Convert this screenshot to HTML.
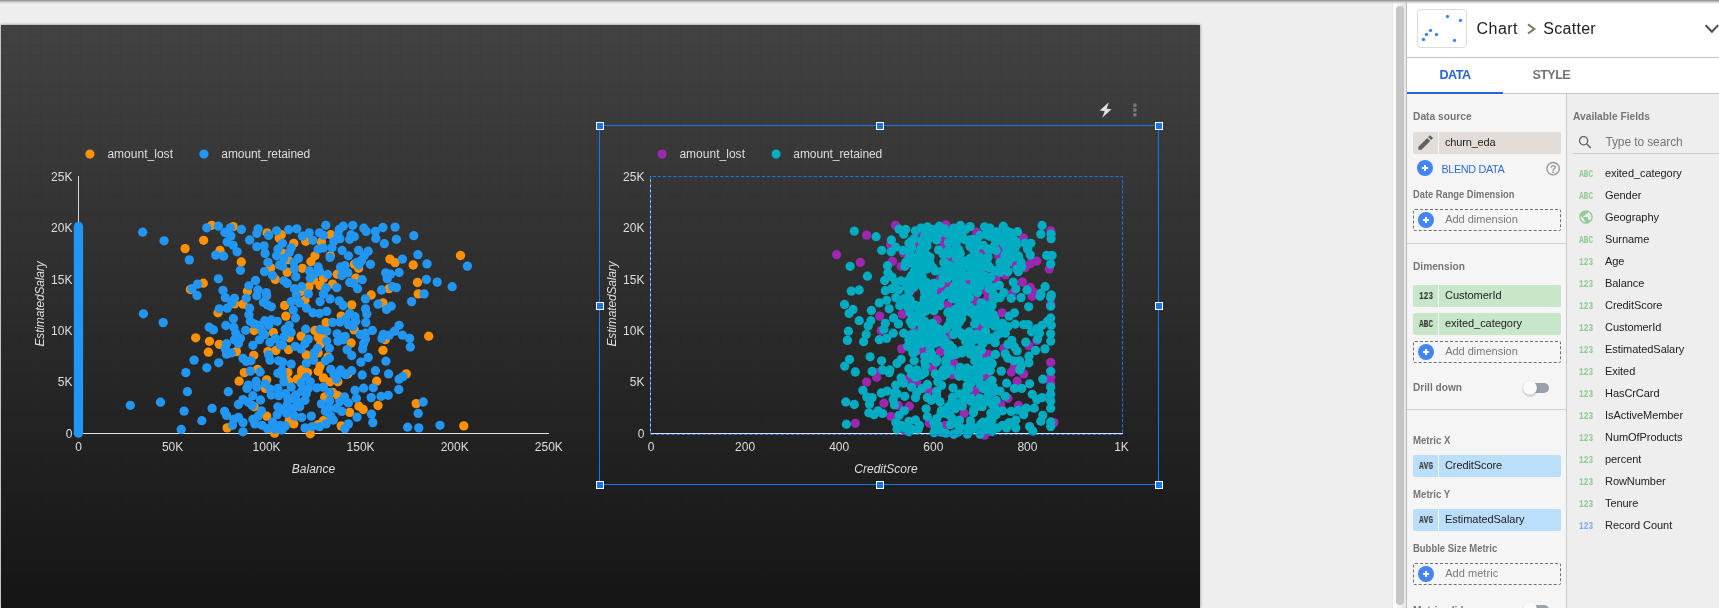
<!DOCTYPE html>
<html><head><meta charset="utf-8"><title>Chart Scatter</title>
<style>
*{box-sizing:border-box;margin:0;padding:0}
html,body{width:1719px;height:608px;overflow:hidden;background:#eeeeee;font-family:"Liberation Sans",sans-serif;}
#topshadow{position:absolute;left:0;top:0;width:1719px;height:4px;background:linear-gradient(#8e8e8e 0,#a8a8a8 1px,#d0d0d0 2px,rgba(238,238,238,0) 4px);z-index:50}
#canvas{position:absolute;left:1px;top:25px;width:1199px;height:583px;
 background:linear-gradient(to bottom,#424242 0,#151515 100%);
 box-shadow:0 0 3px rgba(0,0,0,.45);
}
#sbtrack{position:absolute;left:1392px;top:3px;width:14px;height:605px;background:linear-gradient(to right,#e8e8e8 0,#e8e8e8 1px,#fafafa 1px,#fafafa 5px,#e9e9e9 11px,#e9e9e9 14px)}
#sbthumb{position:absolute;left:1396px;top:6px;width:8px;height:599px;background:#c6c6c6;border-radius:4px}
#panel{position:absolute;left:1406px;top:0;width:313px;height:608px;background:#fff;border-left:1px solid #bcbcbc}
.a{position:absolute}
.t{position:absolute;white-space:nowrap;line-height:20px;height:20px}
#txt{position:absolute;left:0;top:0;width:1719px;height:608px;will-change:transform;-webkit-font-smoothing:antialiased}
.chip{position:absolute;left:1413px;width:148px;height:22px;border-radius:2px}
.chip i{position:absolute;left:24.8px;top:0;width:1.3px;height:22px;background:#f5f5f5}
.dash{position:absolute;left:1413px;width:148px;height:22px;border:1px dashed #707070;border-radius:2px}
.plus{position:absolute;width:16px;height:16px;border-radius:50%;background:#4285f4}
.plus:before{content:"";position:absolute;left:4.8px;top:7.4px;width:6.4px;height:1.2px;background:#fff}
.plus:after{content:"";position:absolute;left:7.4px;top:4.8px;width:1.2px;height:6.4px;background:#fff}
.ic{position:absolute;white-space:nowrap;font-family:"Liberation Mono",monospace;font-weight:bold;font-size:10.5px;line-height:12px;height:12px;transform-origin:0 50%;transform:scaleX(.75);letter-spacing:0;will-change:transform}
.hl{position:absolute;height:1px;background:#cfcfcf}
</style></head><body>
<div id="canvas"><svg width="1199" height="583" style="display:block" shape-rendering="crispEdges"><defs><pattern id="gr" width="10" height="10" patternUnits="userSpaceOnUse"><rect x="0" y="0" width="1" height="1"/><rect x="2" y="0" width="1" height="1"/><rect x="4" y="0" width="1" height="1"/><rect x="6" y="0" width="1" height="1"/><rect x="8" y="0" width="1" height="1"/><rect x="9" y="2" width="1" height="1"/><rect x="9" y="4" width="1" height="1"/><rect x="9" y="6" width="1" height="1"/><rect x="9" y="8" width="1" height="1"/></pattern></defs><rect width="1199" height="583" fill="url(#gr)" fill-opacity=".085"/></svg></div>
<div id="sbtrack"></div><div id="sbthumb"></div>
<div id="panel"></div>
<div class="a" style="left:1417px;top:9px;width:50px;height:39px;border:1px solid #dadce0;border-radius:4px;background:#fff"></div>
<svg class="a" style="left:1417px;top:9px" width="50" height="39"><circle cx="6.5" cy="30.5" r="1.7" fill="#4285f4"/><circle cx="9.5" cy="25.5" r="1.7" fill="#4285f4"/><circle cx="13.5" cy="21.4" r="1.7" fill="#4285f4"/><circle cx="19.5" cy="25.5" r="1.7" fill="#4285f4"/><circle cx="30.5" cy="7.5" r="1.7" fill="#4285f4"/><circle cx="43.5" cy="11.4" r="1.7" fill="#4285f4"/><circle cx="37.5" cy="31.5" r="1.7" fill="#4285f4"/></svg>
<svg class="a" style="left:1524px;top:20px" width="16" height="18"><path d="M4 4.3 L10.4 8.9 L4 13.5" fill="none" stroke="#7a7f62" stroke-width="2.1"/></svg>
<svg class="a" style="left:1702px;top:20px" width="17" height="18"><path d="M3.6 5.1 L9.9 11.7 L16.2 5.1" fill="none" stroke="#4a4e55" stroke-width="2.1"/></svg>
<div class="hl" style="left:1407px;top:57px;width:312px;background:#c4c4c4"></div>
<div class="hl" style="left:1407px;top:93px;width:312px;background:#c9c9c9"></div>
<div class="a" style="left:1407px;top:92px;width:96px;height:2px;background:#2962d9"></div>
<div class="a" style="left:1407px;top:94px;width:159px;height:514px;background:#f5f5f5"></div>
<div class="a" style="left:1566px;top:94px;width:1px;height:514px;background:#c8c8c8"></div>
<div class="a" style="left:1567px;top:94px;width:152px;height:514px;background:#eeeeee"></div>
<div class="chip" style="top:132px;background:#e2ddd9"><i></i></div>
<svg class="a" style="left:1416.4px;top:133.4px" width="19.2" height="19.2" viewBox="0 0 24 24"><path fill="#616161" d="M3 17.25V21h3.75L17.81 9.94l-3.75-3.75L3 17.25zM20.71 7.04a1 1 0 0 0 0-1.41l-2.34-2.34a1 1 0 0 0-1.41 0l-1.83 1.83 3.75 3.75 1.83-1.83z"/></svg>
<div class="chip" style="top:285px;background:#c8e6c9"><i></i></div>
<span class="ic" style="left:1419px;top:290px;color:#333">123</span>
<div class="chip" style="top:313px;background:#c8e6c9"><i></i></div>
<span class="ic" style="left:1419px;top:318px;color:#333">ABC</span>
<div class="chip" style="top:455px;background:#bbdefb"><i></i></div>
<span class="ic" style="left:1419px;top:460px;color:#333">AVG</span>
<div class="chip" style="top:509px;background:#bbdefb"><i></i></div>
<span class="ic" style="left:1419px;top:514px;color:#333">AVG</span>
<div class="plus" style="left:1417px;top:160px"></div>
<svg class="a" style="left:1545px;top:161px" width="16" height="16"><circle cx="8.1" cy="7.7" r="6.2" fill="none" stroke="#999" stroke-width="1.4"/></svg>
<div class="dash" style="top:209px"></div>
<div class="plus" style="left:1418px;top:212px"></div>
<div class="dash" style="top:341px"></div>
<div class="plus" style="left:1418px;top:344px"></div>
<div class="dash" style="top:563px"></div>
<div class="plus" style="left:1418px;top:566px"></div>
<div class="hl" style="left:1407px;top:243px;width:159px"></div>
<div class="hl" style="left:1407px;top:409px;width:159px"></div>
<div class="a" style="left:1527px;top:383px;width:22px;height:10px;border-radius:5px;background:#9aa0a9"></div>
<div class="a" style="left:1522.5px;top:380.8px;width:14.4px;height:14.4px;border-radius:50%;background:#fafafa;box-shadow:0 1px 2px rgba(0,0,0,.3)"></div>
<div class="a" style="left:1527px;top:604.5px;width:22px;height:10px;border-radius:5px;background:#9aa0a9"></div>
<div class="a" style="left:1522.5px;top:602.3px;width:14.4px;height:14.4px;border-radius:50%;background:#fafafa;box-shadow:0 1px 2px rgba(0,0,0,.3)"></div>
<svg class="a" style="left:1576px;top:134.3px" width="18" height="16"><circle cx="7.6" cy="6.7" r="4.1" fill="none" stroke="#616161" stroke-width="1.3"/><path d="M10.6 9.8 L14.8 14" stroke="#616161" stroke-width="1.5" fill="none"/></svg>
<div class="hl" style="left:1573px;top:153px;width:146px;background:#cccccc"></div>
<span class="ic" style="left:1579px;top:168.4px;color:#8fcb92">ABC</span>
<span class="ic" style="left:1579px;top:190.4px;color:#8fcb92">ABC</span>
<svg class="a" style="left:1578px;top:208.6px" width="16" height="16" viewBox="0 0 24 24"><path fill="#8fcb92" d="M12 2C6.48 2 2 6.48 2 12s4.48 10 10 10 10-4.480 10-10S17.52 2 12 2zm-1 17.93c-3.950-.49-7-3.850-7-7.930 0-.62.080-1.210.21-1.790L9 15v1c0 1.100.9 2 2 2v1.930zm6.900-2.540c-.26-.81-1-1.390-1.900-1.390h-1v-3c0-.55-.45-1-1-1H8v-2h2c.55 0 1-.45 1-1V7h2c1.100 0 2-.9 2-2v-.41c2.930 1.190 5 4.060 5 7.410 0 2.080-.8 3.970-2.100 5.390z"/></svg>
<span class="ic" style="left:1579px;top:234.4px;color:#8fcb92">ABC</span>
<span class="ic" style="left:1579px;top:256.4px;color:#8fcb92">123</span>
<span class="ic" style="left:1579px;top:278.4px;color:#8fcb92">123</span>
<span class="ic" style="left:1579px;top:300.4px;color:#8fcb92">123</span>
<span class="ic" style="left:1579px;top:322.4px;color:#8fcb92">123</span>
<span class="ic" style="left:1579px;top:344.4px;color:#8fcb92">123</span>
<span class="ic" style="left:1579px;top:366.4px;color:#8fcb92">123</span>
<span class="ic" style="left:1579px;top:388.4px;color:#8fcb92">123</span>
<span class="ic" style="left:1579px;top:410.4px;color:#8fcb92">123</span>
<span class="ic" style="left:1579px;top:432.4px;color:#8fcb92">123</span>
<span class="ic" style="left:1579px;top:454.4px;color:#8fcb92">123</span>
<span class="ic" style="left:1579px;top:476.4px;color:#8fcb92">123</span>
<span class="ic" style="left:1579px;top:498.4px;color:#8fcb92">123</span>
<span class="ic" style="left:1579px;top:520.4px;color:#7baaf7">123</span>
<div id="topshadow"></div>
<svg class="a" style="left:0;top:0" width="1200" height="608" viewBox="0 0 1200 608"><rect x="78" y="176" width="1" height="258" fill="#d6d6d6"/><rect x="78" y="433" width="471" height="1" fill="#e2e2e2"/><rect x="650" y="176" width="1" height="258" fill="#d6d6d6"/><rect x="650" y="433" width="473" height="1" fill="#e2e2e2"/><rect x="73.8" y="226.5" width="9.3" height="207" fill="#2196f3"/><circle cx="78.45" cy="226.5" r="4.65" fill="#2196f3"/><circle cx="78.45" cy="433.2" r="4.65" fill="#2196f3"/><circle cx="270.7" cy="267.9" r="4.65" fill="#ff9100"/><circle cx="211.7" cy="225.3" r="4.65" fill="#ff9100"/><circle cx="233.2" cy="226.6" r="4.65" fill="#ff9100"/><circle cx="220.0" cy="250.5" r="4.65" fill="#ff9100"/><circle cx="267.1" cy="232.8" r="4.65" fill="#ff9100"/><circle cx="279.2" cy="238.0" r="4.65" fill="#ff9100"/><circle cx="203.3" cy="283.2" r="4.65" fill="#ff9100"/><circle cx="190.4" cy="289.5" r="4.65" fill="#ff9100"/><circle cx="275.3" cy="279.5" r="4.65" fill="#ff9100"/><circle cx="247.4" cy="291.3" r="4.65" fill="#ff9100"/><circle cx="203.6" cy="240.3" r="4.65" fill="#ff9100"/><circle cx="185.1" cy="248.6" r="4.65" fill="#ff9100"/><circle cx="241.3" cy="262.0" r="4.65" fill="#ff9100"/><circle cx="281.3" cy="234.7" r="4.65" fill="#ff9100"/><circle cx="293.8" cy="243.3" r="4.65" fill="#ff9100"/><circle cx="305.7" cy="241.3" r="4.65" fill="#ff9100"/><circle cx="321.4" cy="242.0" r="4.65" fill="#ff9100"/><circle cx="330.7" cy="234.7" r="4.65" fill="#ff9100"/><circle cx="282.6" cy="253.2" r="4.65" fill="#ff9100"/><circle cx="287.9" cy="259.7" r="4.65" fill="#ff9100"/><circle cx="314.9" cy="255.8" r="4.65" fill="#ff9100"/><circle cx="310.9" cy="261.7" r="4.65" fill="#ff9100"/><circle cx="302.4" cy="268.3" r="4.65" fill="#ff9100"/><circle cx="287.2" cy="272.2" r="4.65" fill="#ff9100"/><circle cx="330.3" cy="255.8" r="4.65" fill="#ff9100"/><circle cx="354.3" cy="264.3" r="4.65" fill="#ff9100"/><circle cx="358.6" cy="268.3" r="4.65" fill="#ff9100"/><circle cx="337.2" cy="274.2" r="4.65" fill="#ff9100"/><circle cx="323.4" cy="278.2" r="4.65" fill="#ff9100"/><circle cx="313.6" cy="280.1" r="4.65" fill="#ff9100"/><circle cx="355.7" cy="278.2" r="4.65" fill="#ff9100"/><circle cx="320.1" cy="285.4" r="4.65" fill="#ff9100"/><circle cx="308.9" cy="286.7" r="4.65" fill="#ff9100"/><circle cx="332.6" cy="284.1" r="4.65" fill="#ff9100"/><circle cx="389.9" cy="259.1" r="4.65" fill="#ff9100"/><circle cx="395.1" cy="262.6" r="4.65" fill="#ff9100"/><circle cx="413.2" cy="265.0" r="4.65" fill="#ff9100"/><circle cx="417.5" cy="282.5" r="4.65" fill="#ff9100"/><circle cx="388.9" cy="288.7" r="4.65" fill="#ff9100"/><circle cx="371.2" cy="295.0" r="4.65" fill="#ff9100"/><circle cx="418.2" cy="293.9" r="4.65" fill="#ff9100"/><circle cx="301.7" cy="291.3" r="4.65" fill="#ff9100"/><circle cx="460.5" cy="255.5" r="4.65" fill="#ff9100"/><circle cx="218.0" cy="312.8" r="4.65" fill="#ff9100"/><circle cx="243.0" cy="304.2" r="4.65" fill="#ff9100"/><circle cx="234.5" cy="303.9" r="4.65" fill="#ff9100"/><circle cx="254.2" cy="330.5" r="4.65" fill="#ff9100"/><circle cx="273.3" cy="332.5" r="4.65" fill="#ff9100"/><circle cx="195.7" cy="337.8" r="4.65" fill="#ff9100"/><circle cx="209.5" cy="341.3" r="4.65" fill="#ff9100"/><circle cx="219.3" cy="344.3" r="4.65" fill="#ff9100"/><circle cx="208.4" cy="352.2" r="4.65" fill="#ff9100"/><circle cx="236.4" cy="351.6" r="4.65" fill="#ff9100"/><circle cx="253.8" cy="355.3" r="4.65" fill="#ff9100"/><circle cx="268.0" cy="351.6" r="4.65" fill="#ff9100"/><circle cx="275.9" cy="350.5" r="4.65" fill="#ff9100"/><circle cx="257.5" cy="369.3" r="4.65" fill="#ff9100"/><circle cx="244.3" cy="372.6" r="4.65" fill="#ff9100"/><circle cx="284.6" cy="305.5" r="4.65" fill="#ff9100"/><circle cx="305.0" cy="300.3" r="4.65" fill="#ff9100"/><circle cx="285.9" cy="316.1" r="4.65" fill="#ff9100"/><circle cx="351.7" cy="304.9" r="4.65" fill="#ff9100"/><circle cx="383.0" cy="302.9" r="4.65" fill="#ff9100"/><circle cx="341.2" cy="316.1" r="4.65" fill="#ff9100"/><circle cx="326.1" cy="322.6" r="4.65" fill="#ff9100"/><circle cx="314.9" cy="330.5" r="4.65" fill="#ff9100"/><circle cx="318.2" cy="337.1" r="4.65" fill="#ff9100"/><circle cx="323.4" cy="338.4" r="4.65" fill="#ff9100"/><circle cx="320.8" cy="343.7" r="4.65" fill="#ff9100"/><circle cx="301.1" cy="336.1" r="4.65" fill="#ff9100"/><circle cx="289.2" cy="337.8" r="4.65" fill="#ff9100"/><circle cx="354.3" cy="329.9" r="4.65" fill="#ff9100"/><circle cx="385.3" cy="339.7" r="4.65" fill="#ff9100"/><circle cx="351.1" cy="343.0" r="4.65" fill="#ff9100"/><circle cx="288.6" cy="349.6" r="4.65" fill="#ff9100"/><circle cx="306.3" cy="354.9" r="4.65" fill="#ff9100"/><circle cx="318.2" cy="352.9" r="4.65" fill="#ff9100"/><circle cx="328.0" cy="356.8" r="4.65" fill="#ff9100"/><circle cx="383.0" cy="350.3" r="4.65" fill="#ff9100"/><circle cx="428.7" cy="336.2" r="4.65" fill="#ff9100"/><circle cx="320.1" cy="366.1" r="4.65" fill="#ff9100"/><circle cx="301.7" cy="370.0" r="4.65" fill="#ff9100"/><circle cx="307.6" cy="372.6" r="4.65" fill="#ff9100"/><circle cx="318.2" cy="371.3" r="4.65" fill="#ff9100"/><circle cx="287.9" cy="372.6" r="4.65" fill="#ff9100"/><circle cx="406.3" cy="373.9" r="4.65" fill="#ff9100"/><circle cx="239.1" cy="381.2" r="4.65" fill="#ff9100"/><circle cx="266.7" cy="379.9" r="4.65" fill="#ff9100"/><circle cx="265.4" cy="388.4" r="4.65" fill="#ff9100"/><circle cx="254.2" cy="406.8" r="4.65" fill="#ff9100"/><circle cx="266.7" cy="416.1" r="4.65" fill="#ff9100"/><circle cx="227.2" cy="427.9" r="4.65" fill="#ff9100"/><circle cx="274.6" cy="433.2" r="4.65" fill="#ff9100"/><circle cx="301.7" cy="372.6" r="4.65" fill="#ff9100"/><circle cx="297.1" cy="379.2" r="4.65" fill="#ff9100"/><circle cx="323.4" cy="377.9" r="4.65" fill="#ff9100"/><circle cx="330.0" cy="381.8" r="4.65" fill="#ff9100"/><circle cx="337.9" cy="381.8" r="4.65" fill="#ff9100"/><circle cx="347.8" cy="373.9" r="4.65" fill="#ff9100"/><circle cx="376.7" cy="381.2" r="4.65" fill="#ff9100"/><circle cx="332.6" cy="392.4" r="4.65" fill="#ff9100"/><circle cx="324.7" cy="397.0" r="4.65" fill="#ff9100"/><circle cx="337.9" cy="395.7" r="4.65" fill="#ff9100"/><circle cx="358.9" cy="406.2" r="4.65" fill="#ff9100"/><circle cx="363.2" cy="409.5" r="4.65" fill="#ff9100"/><circle cx="349.7" cy="412.4" r="4.65" fill="#ff9100"/><circle cx="378.0" cy="405.5" r="4.65" fill="#ff9100"/><circle cx="416.2" cy="403.6" r="4.65" fill="#ff9100"/><circle cx="289.2" cy="420.7" r="4.65" fill="#ff9100"/><circle cx="293.8" cy="423.9" r="4.65" fill="#ff9100"/><circle cx="323.4" cy="420.7" r="4.65" fill="#ff9100"/><circle cx="318.2" cy="424.6" r="4.65" fill="#ff9100"/><circle cx="341.2" cy="425.9" r="4.65" fill="#ff9100"/><circle cx="310.3" cy="433.8" r="4.65" fill="#ff9100"/><circle cx="288.6" cy="381.2" r="4.65" fill="#ff9100"/><circle cx="463.8" cy="425.9" r="4.65" fill="#ff9100"/><circle cx="142.6" cy="232.2" r="4.65" fill="#2196f3"/><circle cx="164.1" cy="240.8" r="4.65" fill="#2196f3"/><circle cx="189.3" cy="259.9" r="4.65" fill="#2196f3"/><circle cx="206.8" cy="227.8" r="4.65" fill="#2196f3"/><circle cx="218.4" cy="226.2" r="4.65" fill="#2196f3"/><circle cx="230.3" cy="227.8" r="4.65" fill="#2196f3"/><circle cx="224.9" cy="232.5" r="4.65" fill="#2196f3"/><circle cx="230.9" cy="236.1" r="4.65" fill="#2196f3"/><circle cx="227.2" cy="242.0" r="4.65" fill="#2196f3"/><circle cx="233.2" cy="245.3" r="4.65" fill="#2196f3"/><circle cx="237.1" cy="251.8" r="4.65" fill="#2196f3"/><circle cx="241.4" cy="229.5" r="4.65" fill="#2196f3"/><circle cx="258.2" cy="228.8" r="4.65" fill="#2196f3"/><circle cx="256.8" cy="233.4" r="4.65" fill="#2196f3"/><circle cx="249.6" cy="240.0" r="4.65" fill="#2196f3"/><circle cx="256.8" cy="246.6" r="4.65" fill="#2196f3"/><circle cx="264.1" cy="245.9" r="4.65" fill="#2196f3"/><circle cx="265.1" cy="253.4" r="4.65" fill="#2196f3"/><circle cx="268.0" cy="262.4" r="4.65" fill="#2196f3"/><circle cx="268.7" cy="235.4" r="4.65" fill="#2196f3"/><circle cx="276.6" cy="230.8" r="4.65" fill="#2196f3"/><circle cx="215.7" cy="255.1" r="4.65" fill="#2196f3"/><circle cx="223.6" cy="256.2" r="4.65" fill="#2196f3"/><circle cx="240.4" cy="270.3" r="4.65" fill="#2196f3"/><circle cx="218.4" cy="278.8" r="4.65" fill="#2196f3"/><circle cx="264.5" cy="271.6" r="4.65" fill="#2196f3"/><circle cx="272.6" cy="275.5" r="4.65" fill="#2196f3"/><circle cx="255.5" cy="280.5" r="4.65" fill="#2196f3"/><circle cx="248.9" cy="285.8" r="4.65" fill="#2196f3"/><circle cx="197.6" cy="284.1" r="4.65" fill="#2196f3"/><circle cx="192.0" cy="288.7" r="4.65" fill="#2196f3"/><circle cx="223.0" cy="290.3" r="4.65" fill="#2196f3"/><circle cx="257.9" cy="290.0" r="4.65" fill="#2196f3"/><circle cx="266.3" cy="292.6" r="4.65" fill="#2196f3"/><circle cx="197.0" cy="295.5" r="4.65" fill="#2196f3"/><circle cx="277.9" cy="249.2" r="4.65" fill="#2196f3"/><circle cx="276.6" cy="255.8" r="4.65" fill="#2196f3"/><circle cx="279.5" cy="265.0" r="4.65" fill="#2196f3"/><circle cx="288.6" cy="229.7" r="4.65" fill="#2196f3"/><circle cx="296.8" cy="228.8" r="4.65" fill="#2196f3"/><circle cx="302.4" cy="236.1" r="4.65" fill="#2196f3"/><circle cx="309.2" cy="232.8" r="4.65" fill="#2196f3"/><circle cx="312.9" cy="240.3" r="4.65" fill="#2196f3"/><circle cx="325.8" cy="225.3" r="4.65" fill="#2196f3"/><circle cx="319.5" cy="232.8" r="4.65" fill="#2196f3"/><circle cx="323.4" cy="235.4" r="4.65" fill="#2196f3"/><circle cx="343.2" cy="226.2" r="4.65" fill="#2196f3"/><circle cx="339.2" cy="229.5" r="4.65" fill="#2196f3"/><circle cx="337.9" cy="234.7" r="4.65" fill="#2196f3"/><circle cx="339.9" cy="238.7" r="4.65" fill="#2196f3"/><circle cx="333.9" cy="241.3" r="4.65" fill="#2196f3"/><circle cx="332.0" cy="247.6" r="4.65" fill="#2196f3"/><circle cx="352.8" cy="225.3" r="4.65" fill="#2196f3"/><circle cx="351.1" cy="234.7" r="4.65" fill="#2196f3"/><circle cx="354.3" cy="236.7" r="4.65" fill="#2196f3"/><circle cx="349.7" cy="239.3" r="4.65" fill="#2196f3"/><circle cx="363.8" cy="228.2" r="4.65" fill="#2196f3"/><circle cx="366.2" cy="231.4" r="4.65" fill="#2196f3"/><circle cx="375.4" cy="231.4" r="4.65" fill="#2196f3"/><circle cx="382.9" cy="227.5" r="4.65" fill="#2196f3"/><circle cx="375.8" cy="238.4" r="4.65" fill="#2196f3"/><circle cx="384.3" cy="243.7" r="4.65" fill="#2196f3"/><circle cx="395.1" cy="227.1" r="4.65" fill="#2196f3"/><circle cx="396.4" cy="239.3" r="4.65" fill="#2196f3"/><circle cx="413.8" cy="235.7" r="4.65" fill="#2196f3"/><circle cx="282.4" cy="243.3" r="4.65" fill="#2196f3"/><circle cx="291.2" cy="247.9" r="4.65" fill="#2196f3"/><circle cx="289.2" cy="252.5" r="4.65" fill="#2196f3"/><circle cx="318.2" cy="249.2" r="4.65" fill="#2196f3"/><circle cx="323.4" cy="247.9" r="4.65" fill="#2196f3"/><circle cx="342.1" cy="250.5" r="4.65" fill="#2196f3"/><circle cx="348.4" cy="255.8" r="4.65" fill="#2196f3"/><circle cx="358.6" cy="250.3" r="4.65" fill="#2196f3"/><circle cx="368.2" cy="251.2" r="4.65" fill="#2196f3"/><circle cx="364.2" cy="255.8" r="4.65" fill="#2196f3"/><circle cx="361.6" cy="260.4" r="4.65" fill="#2196f3"/><circle cx="357.0" cy="262.4" r="4.65" fill="#2196f3"/><circle cx="358.9" cy="265.0" r="4.65" fill="#2196f3"/><circle cx="370.5" cy="264.3" r="4.65" fill="#2196f3"/><circle cx="330.0" cy="257.4" r="4.65" fill="#2196f3"/><circle cx="298.4" cy="258.4" r="4.65" fill="#2196f3"/><circle cx="293.8" cy="262.4" r="4.65" fill="#2196f3"/><circle cx="283.9" cy="258.4" r="4.65" fill="#2196f3"/><circle cx="282.6" cy="266.3" r="4.65" fill="#2196f3"/><circle cx="294.5" cy="268.9" r="4.65" fill="#2196f3"/><circle cx="295.8" cy="276.8" r="4.65" fill="#2196f3"/><circle cx="340.5" cy="267.0" r="4.65" fill="#2196f3"/><circle cx="345.1" cy="265.7" r="4.65" fill="#2196f3"/><circle cx="343.2" cy="271.6" r="4.65" fill="#2196f3"/><circle cx="347.8" cy="272.9" r="4.65" fill="#2196f3"/><circle cx="341.8" cy="275.5" r="4.65" fill="#2196f3"/><circle cx="318.2" cy="267.0" r="4.65" fill="#2196f3"/><circle cx="319.5" cy="271.6" r="4.65" fill="#2196f3"/><circle cx="309.6" cy="270.9" r="4.65" fill="#2196f3"/><circle cx="314.2" cy="274.2" r="4.65" fill="#2196f3"/><circle cx="310.3" cy="278.2" r="4.65" fill="#2196f3"/><circle cx="327.6" cy="274.5" r="4.65" fill="#2196f3"/><circle cx="349.7" cy="282.4" r="4.65" fill="#2196f3"/><circle cx="353.7" cy="283.4" r="4.65" fill="#2196f3"/><circle cx="362.2" cy="279.7" r="4.65" fill="#2196f3"/><circle cx="357.6" cy="288.7" r="4.65" fill="#2196f3"/><circle cx="283.9" cy="280.8" r="4.65" fill="#2196f3"/><circle cx="287.2" cy="283.4" r="4.65" fill="#2196f3"/><circle cx="294.5" cy="288.7" r="4.65" fill="#2196f3"/><circle cx="301.7" cy="286.7" r="4.65" fill="#2196f3"/><circle cx="326.1" cy="288.0" r="4.65" fill="#2196f3"/><circle cx="336.8" cy="287.6" r="4.65" fill="#2196f3"/><circle cx="308.3" cy="293.9" r="4.65" fill="#2196f3"/><circle cx="323.4" cy="293.9" r="4.65" fill="#2196f3"/><circle cx="402.4" cy="259.1" r="4.65" fill="#2196f3"/><circle cx="417.9" cy="254.7" r="4.65" fill="#2196f3"/><circle cx="427.0" cy="263.9" r="4.65" fill="#2196f3"/><circle cx="399.1" cy="272.5" r="4.65" fill="#2196f3"/><circle cx="385.7" cy="272.9" r="4.65" fill="#2196f3"/><circle cx="390.5" cy="274.2" r="4.65" fill="#2196f3"/><circle cx="387.2" cy="278.8" r="4.65" fill="#2196f3"/><circle cx="392.5" cy="286.7" r="4.65" fill="#2196f3"/><circle cx="396.4" cy="287.6" r="4.65" fill="#2196f3"/><circle cx="381.6" cy="290.0" r="4.65" fill="#2196f3"/><circle cx="426.4" cy="279.5" r="4.65" fill="#2196f3"/><circle cx="437.2" cy="282.1" r="4.65" fill="#2196f3"/><circle cx="424.1" cy="293.9" r="4.65" fill="#2196f3"/><circle cx="296.4" cy="295.0" r="4.65" fill="#2196f3"/><circle cx="467.4" cy="266.1" r="4.65" fill="#2196f3"/><circle cx="452.2" cy="286.7" r="4.65" fill="#2196f3"/><circle cx="143.4" cy="313.8" r="4.65" fill="#2196f3"/><circle cx="163.2" cy="322.6" r="4.65" fill="#2196f3"/><circle cx="219.3" cy="308.8" r="4.65" fill="#2196f3"/><circle cx="227.2" cy="308.2" r="4.65" fill="#2196f3"/><circle cx="231.8" cy="302.9" r="4.65" fill="#2196f3"/><circle cx="225.3" cy="297.6" r="4.65" fill="#2196f3"/><circle cx="234.5" cy="298.3" r="4.65" fill="#2196f3"/><circle cx="246.3" cy="298.3" r="4.65" fill="#2196f3"/><circle cx="249.6" cy="308.2" r="4.65" fill="#2196f3"/><circle cx="248.9" cy="314.7" r="4.65" fill="#2196f3"/><circle cx="256.8" cy="295.7" r="4.65" fill="#2196f3"/><circle cx="266.7" cy="295.7" r="4.65" fill="#2196f3"/><circle cx="263.4" cy="302.2" r="4.65" fill="#2196f3"/><circle cx="267.4" cy="304.9" r="4.65" fill="#2196f3"/><circle cx="271.3" cy="306.8" r="4.65" fill="#2196f3"/><circle cx="233.4" cy="318.7" r="4.65" fill="#2196f3"/><circle cx="225.9" cy="325.5" r="4.65" fill="#2196f3"/><circle cx="233.8" cy="327.2" r="4.65" fill="#2196f3"/><circle cx="209.2" cy="327.2" r="4.65" fill="#2196f3"/><circle cx="213.4" cy="329.9" r="4.65" fill="#2196f3"/><circle cx="245.7" cy="330.3" r="4.65" fill="#2196f3"/><circle cx="250.3" cy="321.3" r="4.65" fill="#2196f3"/><circle cx="254.2" cy="323.9" r="4.65" fill="#2196f3"/><circle cx="259.5" cy="325.3" r="4.65" fill="#2196f3"/><circle cx="264.7" cy="320.7" r="4.65" fill="#2196f3"/><circle cx="271.3" cy="320.0" r="4.65" fill="#2196f3"/><circle cx="277.2" cy="321.3" r="4.65" fill="#2196f3"/><circle cx="268.7" cy="325.3" r="4.65" fill="#2196f3"/><circle cx="262.1" cy="331.2" r="4.65" fill="#2196f3"/><circle cx="264.7" cy="334.5" r="4.65" fill="#2196f3"/><circle cx="259.5" cy="339.7" r="4.65" fill="#2196f3"/><circle cx="252.9" cy="345.3" r="4.65" fill="#2196f3"/><circle cx="235.8" cy="333.2" r="4.65" fill="#2196f3"/><circle cx="240.4" cy="338.4" r="4.65" fill="#2196f3"/><circle cx="234.5" cy="339.7" r="4.65" fill="#2196f3"/><circle cx="238.4" cy="343.7" r="4.65" fill="#2196f3"/><circle cx="226.6" cy="343.7" r="4.65" fill="#2196f3"/><circle cx="225.3" cy="348.9" r="4.65" fill="#2196f3"/><circle cx="226.6" cy="354.2" r="4.65" fill="#2196f3"/><circle cx="231.2" cy="352.9" r="4.65" fill="#2196f3"/><circle cx="270.0" cy="342.4" r="4.65" fill="#2196f3"/><circle cx="275.3" cy="338.4" r="4.65" fill="#2196f3"/><circle cx="280.0" cy="345.0" r="4.65" fill="#2196f3"/><circle cx="268.7" cy="354.9" r="4.65" fill="#2196f3"/><circle cx="270.0" cy="360.1" r="4.65" fill="#2196f3"/><circle cx="278.6" cy="360.8" r="4.65" fill="#2196f3"/><circle cx="243.0" cy="358.4" r="4.65" fill="#2196f3"/><circle cx="246.3" cy="361.4" r="4.65" fill="#2196f3"/><circle cx="250.9" cy="360.8" r="4.65" fill="#2196f3"/><circle cx="194.1" cy="360.1" r="4.65" fill="#2196f3"/><circle cx="218.7" cy="362.8" r="4.65" fill="#2196f3"/><circle cx="206.8" cy="367.8" r="4.65" fill="#2196f3"/><circle cx="185.8" cy="372.6" r="4.65" fill="#2196f3"/><circle cx="250.3" cy="371.1" r="4.65" fill="#2196f3"/><circle cx="260.1" cy="372.0" r="4.65" fill="#2196f3"/><circle cx="277.9" cy="373.3" r="4.65" fill="#2196f3"/><circle cx="291.2" cy="301.6" r="4.65" fill="#2196f3"/><circle cx="297.1" cy="300.3" r="4.65" fill="#2196f3"/><circle cx="299.7" cy="302.9" r="4.65" fill="#2196f3"/><circle cx="293.2" cy="310.1" r="4.65" fill="#2196f3"/><circle cx="295.5" cy="318.0" r="4.65" fill="#2196f3"/><circle cx="306.6" cy="308.2" r="4.65" fill="#2196f3"/><circle cx="312.9" cy="312.8" r="4.65" fill="#2196f3"/><circle cx="319.5" cy="313.4" r="4.65" fill="#2196f3"/><circle cx="326.7" cy="311.4" r="4.65" fill="#2196f3"/><circle cx="320.1" cy="301.6" r="4.65" fill="#2196f3"/><circle cx="330.0" cy="298.9" r="4.65" fill="#2196f3"/><circle cx="339.2" cy="300.9" r="4.65" fill="#2196f3"/><circle cx="343.2" cy="305.5" r="4.65" fill="#2196f3"/><circle cx="365.5" cy="298.9" r="4.65" fill="#2196f3"/><circle cx="365.5" cy="308.8" r="4.65" fill="#2196f3"/><circle cx="366.8" cy="314.1" r="4.65" fill="#2196f3"/><circle cx="378.0" cy="304.2" r="4.65" fill="#2196f3"/><circle cx="386.6" cy="309.5" r="4.65" fill="#2196f3"/><circle cx="391.2" cy="306.2" r="4.65" fill="#2196f3"/><circle cx="411.6" cy="301.6" r="4.65" fill="#2196f3"/><circle cx="349.7" cy="313.4" r="4.65" fill="#2196f3"/><circle cx="355.0" cy="316.7" r="4.65" fill="#2196f3"/><circle cx="345.8" cy="318.7" r="4.65" fill="#2196f3"/><circle cx="339.9" cy="322.0" r="4.65" fill="#2196f3"/><circle cx="332.6" cy="322.4" r="4.65" fill="#2196f3"/><circle cx="348.4" cy="324.6" r="4.65" fill="#2196f3"/><circle cx="355.7" cy="321.3" r="4.65" fill="#2196f3"/><circle cx="353.0" cy="326.6" r="4.65" fill="#2196f3"/><circle cx="365.8" cy="322.6" r="4.65" fill="#2196f3"/><circle cx="289.2" cy="325.3" r="4.65" fill="#2196f3"/><circle cx="285.3" cy="329.2" r="4.65" fill="#2196f3"/><circle cx="291.2" cy="332.5" r="4.65" fill="#2196f3"/><circle cx="283.9" cy="337.1" r="4.65" fill="#2196f3"/><circle cx="282.6" cy="345.0" r="4.65" fill="#2196f3"/><circle cx="305.7" cy="329.2" r="4.65" fill="#2196f3"/><circle cx="308.3" cy="339.1" r="4.65" fill="#2196f3"/><circle cx="305.0" cy="343.7" r="4.65" fill="#2196f3"/><circle cx="295.1" cy="346.3" r="4.65" fill="#2196f3"/><circle cx="301.1" cy="348.9" r="4.65" fill="#2196f3"/><circle cx="320.1" cy="329.5" r="4.65" fill="#2196f3"/><circle cx="326.7" cy="331.2" r="4.65" fill="#2196f3"/><circle cx="337.2" cy="333.8" r="4.65" fill="#2196f3"/><circle cx="345.1" cy="336.4" r="4.65" fill="#2196f3"/><circle cx="337.9" cy="341.1" r="4.65" fill="#2196f3"/><circle cx="343.2" cy="339.7" r="4.65" fill="#2196f3"/><circle cx="326.7" cy="341.1" r="4.65" fill="#2196f3"/><circle cx="329.3" cy="348.3" r="4.65" fill="#2196f3"/><circle cx="317.5" cy="348.3" r="4.65" fill="#2196f3"/><circle cx="314.2" cy="352.9" r="4.65" fill="#2196f3"/><circle cx="313.6" cy="360.1" r="4.65" fill="#2196f3"/><circle cx="306.3" cy="363.4" r="4.65" fill="#2196f3"/><circle cx="291.2" cy="364.1" r="4.65" fill="#2196f3"/><circle cx="282.6" cy="362.1" r="4.65" fill="#2196f3"/><circle cx="282.0" cy="370.0" r="4.65" fill="#2196f3"/><circle cx="360.3" cy="334.5" r="4.65" fill="#2196f3"/><circle cx="365.5" cy="333.2" r="4.65" fill="#2196f3"/><circle cx="365.5" cy="339.1" r="4.65" fill="#2196f3"/><circle cx="363.6" cy="343.7" r="4.65" fill="#2196f3"/><circle cx="362.6" cy="348.9" r="4.65" fill="#2196f3"/><circle cx="372.4" cy="330.5" r="4.65" fill="#2196f3"/><circle cx="383.3" cy="334.5" r="4.65" fill="#2196f3"/><circle cx="382.0" cy="338.4" r="4.65" fill="#2196f3"/><circle cx="389.2" cy="335.1" r="4.65" fill="#2196f3"/><circle cx="394.5" cy="331.2" r="4.65" fill="#2196f3"/><circle cx="399.1" cy="325.3" r="4.65" fill="#2196f3"/><circle cx="402.4" cy="335.1" r="4.65" fill="#2196f3"/><circle cx="409.6" cy="338.4" r="4.65" fill="#2196f3"/><circle cx="410.3" cy="347.0" r="4.65" fill="#2196f3"/><circle cx="347.1" cy="349.6" r="4.65" fill="#2196f3"/><circle cx="351.7" cy="355.5" r="4.65" fill="#2196f3"/><circle cx="325.4" cy="360.8" r="4.65" fill="#2196f3"/><circle cx="329.3" cy="358.2" r="4.65" fill="#2196f3"/><circle cx="360.9" cy="362.1" r="4.65" fill="#2196f3"/><circle cx="368.2" cy="357.5" r="4.65" fill="#2196f3"/><circle cx="385.9" cy="361.2" r="4.65" fill="#2196f3"/><circle cx="330.7" cy="369.3" r="4.65" fill="#2196f3"/><circle cx="340.5" cy="370.0" r="4.65" fill="#2196f3"/><circle cx="351.7" cy="370.7" r="4.65" fill="#2196f3"/><circle cx="375.4" cy="370.7" r="4.65" fill="#2196f3"/><circle cx="388.6" cy="373.9" r="4.65" fill="#2196f3"/><circle cx="362.2" cy="375.0" r="4.65" fill="#2196f3"/><circle cx="333.9" cy="373.9" r="4.65" fill="#2196f3"/><circle cx="345.8" cy="374.6" r="4.65" fill="#2196f3"/><circle cx="187.4" cy="391.7" r="4.65" fill="#2196f3"/><circle cx="228.3" cy="391.7" r="4.65" fill="#2196f3"/><circle cx="130.3" cy="405.3" r="4.65" fill="#2196f3"/><circle cx="160.5" cy="402.2" r="4.65" fill="#2196f3"/><circle cx="184.1" cy="411.1" r="4.65" fill="#2196f3"/><circle cx="212.1" cy="408.4" r="4.65" fill="#2196f3"/><circle cx="224.6" cy="411.4" r="4.65" fill="#2196f3"/><circle cx="226.6" cy="415.4" r="4.65" fill="#2196f3"/><circle cx="201.8" cy="420.7" r="4.65" fill="#2196f3"/><circle cx="181.2" cy="429.5" r="4.65" fill="#2196f3"/><circle cx="256.2" cy="381.2" r="4.65" fill="#2196f3"/><circle cx="248.3" cy="385.1" r="4.65" fill="#2196f3"/><circle cx="247.0" cy="388.4" r="4.65" fill="#2196f3"/><circle cx="256.8" cy="387.1" r="4.65" fill="#2196f3"/><circle cx="265.4" cy="383.8" r="4.65" fill="#2196f3"/><circle cx="270.0" cy="389.1" r="4.65" fill="#2196f3"/><circle cx="271.3" cy="395.0" r="4.65" fill="#2196f3"/><circle cx="277.9" cy="388.4" r="4.65" fill="#2196f3"/><circle cx="278.6" cy="395.7" r="4.65" fill="#2196f3"/><circle cx="252.9" cy="395.7" r="4.65" fill="#2196f3"/><circle cx="243.0" cy="399.6" r="4.65" fill="#2196f3"/><circle cx="248.3" cy="402.2" r="4.65" fill="#2196f3"/><circle cx="238.4" cy="404.5" r="4.65" fill="#2196f3"/><circle cx="252.2" cy="405.5" r="4.65" fill="#2196f3"/><circle cx="260.5" cy="400.0" r="4.65" fill="#2196f3"/><circle cx="261.4" cy="410.8" r="4.65" fill="#2196f3"/><circle cx="258.2" cy="416.1" r="4.65" fill="#2196f3"/><circle cx="252.9" cy="419.3" r="4.65" fill="#2196f3"/><circle cx="254.9" cy="423.9" r="4.65" fill="#2196f3"/><circle cx="262.1" cy="425.3" r="4.65" fill="#2196f3"/><circle cx="267.4" cy="428.6" r="4.65" fill="#2196f3"/><circle cx="272.6" cy="422.0" r="4.65" fill="#2196f3"/><circle cx="277.2" cy="414.7" r="4.65" fill="#2196f3"/><circle cx="277.9" cy="406.8" r="4.65" fill="#2196f3"/><circle cx="275.3" cy="429.2" r="4.65" fill="#2196f3"/><circle cx="280.0" cy="425.3" r="4.65" fill="#2196f3"/><circle cx="238.4" cy="417.4" r="4.65" fill="#2196f3"/><circle cx="233.8" cy="419.3" r="4.65" fill="#2196f3"/><circle cx="243.0" cy="422.6" r="4.65" fill="#2196f3"/><circle cx="232.5" cy="425.3" r="4.65" fill="#2196f3"/><circle cx="243.0" cy="431.8" r="4.65" fill="#2196f3"/><circle cx="282.6" cy="375.3" r="4.65" fill="#2196f3"/><circle cx="283.9" cy="381.8" r="4.65" fill="#2196f3"/><circle cx="291.2" cy="387.1" r="4.65" fill="#2196f3"/><circle cx="306.3" cy="377.2" r="4.65" fill="#2196f3"/><circle cx="301.1" cy="383.2" r="4.65" fill="#2196f3"/><circle cx="310.3" cy="381.8" r="4.65" fill="#2196f3"/><circle cx="336.6" cy="379.2" r="4.65" fill="#2196f3"/><circle cx="341.8" cy="372.6" r="4.65" fill="#2196f3"/><circle cx="399.1" cy="379.2" r="4.65" fill="#2196f3"/><circle cx="403.0" cy="376.6" r="4.65" fill="#2196f3"/><circle cx="398.8" cy="389.5" r="4.65" fill="#2196f3"/><circle cx="316.8" cy="387.8" r="4.65" fill="#2196f3"/><circle cx="323.4" cy="387.1" r="4.65" fill="#2196f3"/><circle cx="329.7" cy="392.4" r="4.65" fill="#2196f3"/><circle cx="301.7" cy="391.1" r="4.65" fill="#2196f3"/><circle cx="306.3" cy="393.7" r="4.65" fill="#2196f3"/><circle cx="285.3" cy="393.7" r="4.65" fill="#2196f3"/><circle cx="291.8" cy="398.3" r="4.65" fill="#2196f3"/><circle cx="305.0" cy="400.3" r="4.65" fill="#2196f3"/><circle cx="299.7" cy="406.8" r="4.65" fill="#2196f3"/><circle cx="287.2" cy="404.9" r="4.65" fill="#2196f3"/><circle cx="282.6" cy="409.5" r="4.65" fill="#2196f3"/><circle cx="286.6" cy="413.4" r="4.65" fill="#2196f3"/><circle cx="294.5" cy="416.1" r="4.65" fill="#2196f3"/><circle cx="301.7" cy="417.4" r="4.65" fill="#2196f3"/><circle cx="311.3" cy="416.1" r="4.65" fill="#2196f3"/><circle cx="321.4" cy="403.9" r="4.65" fill="#2196f3"/><circle cx="329.7" cy="400.9" r="4.65" fill="#2196f3"/><circle cx="325.4" cy="411.4" r="4.65" fill="#2196f3"/><circle cx="329.3" cy="408.2" r="4.65" fill="#2196f3"/><circle cx="330.7" cy="416.1" r="4.65" fill="#2196f3"/><circle cx="333.3" cy="420.0" r="4.65" fill="#2196f3"/><circle cx="326.1" cy="423.9" r="4.65" fill="#2196f3"/><circle cx="319.5" cy="426.6" r="4.65" fill="#2196f3"/><circle cx="312.2" cy="426.6" r="4.65" fill="#2196f3"/><circle cx="305.0" cy="427.9" r="4.65" fill="#2196f3"/><circle cx="285.3" cy="425.9" r="4.65" fill="#2196f3"/><circle cx="282.0" cy="429.9" r="4.65" fill="#2196f3"/><circle cx="339.9" cy="401.6" r="4.65" fill="#2196f3"/><circle cx="344.5" cy="397.0" r="4.65" fill="#2196f3"/><circle cx="348.4" cy="402.9" r="4.65" fill="#2196f3"/><circle cx="356.3" cy="398.3" r="4.65" fill="#2196f3"/><circle cx="341.8" cy="411.4" r="4.65" fill="#2196f3"/><circle cx="336.6" cy="408.2" r="4.65" fill="#2196f3"/><circle cx="355.0" cy="390.4" r="4.65" fill="#2196f3"/><circle cx="363.6" cy="388.2" r="4.65" fill="#2196f3"/><circle cx="373.2" cy="387.8" r="4.65" fill="#2196f3"/><circle cx="371.2" cy="397.6" r="4.65" fill="#2196f3"/><circle cx="381.1" cy="396.3" r="4.65" fill="#2196f3"/><circle cx="388.2" cy="395.3" r="4.65" fill="#2196f3"/><circle cx="357.0" cy="417.1" r="4.65" fill="#2196f3"/><circle cx="371.4" cy="414.1" r="4.65" fill="#2196f3"/><circle cx="372.8" cy="422.6" r="4.65" fill="#2196f3"/><circle cx="348.4" cy="423.9" r="4.65" fill="#2196f3"/><circle cx="344.9" cy="428.6" r="4.65" fill="#2196f3"/><circle cx="423.2" cy="402.0" r="4.65" fill="#2196f3"/><circle cx="418.2" cy="413.4" r="4.65" fill="#2196f3"/><circle cx="407.6" cy="427.2" r="4.65" fill="#2196f3"/><circle cx="418.8" cy="427.9" r="4.65" fill="#2196f3"/><circle cx="440.0" cy="425.3" r="4.65" fill="#2196f3"/><circle cx="295.8" cy="395.0" r="4.65" fill="#2196f3"/><circle cx="297.1" cy="401.6" r="4.65" fill="#2196f3"/><circle cx="293.2" cy="408.2" r="4.65" fill="#2196f3"/><circle cx="287.9" cy="398.9" r="4.65" fill="#2196f3"/><circle cx="308.3" cy="388.4" r="4.65" fill="#2196f3"/><circle cx="895.5" cy="225.3" r="4.65" fill="#9c27b0"/><circle cx="866.6" cy="235.1" r="4.65" fill="#9c27b0"/><circle cx="836.6" cy="254.7" r="4.65" fill="#9c27b0"/><circle cx="860.3" cy="262.4" r="4.65" fill="#9c27b0"/><circle cx="892.5" cy="261.3" r="4.65" fill="#9c27b0"/><circle cx="890.5" cy="244.6" r="4.65" fill="#9c27b0"/><circle cx="918.2" cy="234.7" r="4.65" fill="#9c27b0"/><circle cx="916.8" cy="242.6" r="4.65" fill="#9c27b0"/><circle cx="903.7" cy="253.2" r="4.65" fill="#9c27b0"/><circle cx="901.1" cy="266.3" r="4.65" fill="#9c27b0"/><circle cx="942.5" cy="239.3" r="4.65" fill="#9c27b0"/><circle cx="944.5" cy="245.3" r="4.65" fill="#9c27b0"/><circle cx="945.8" cy="224.9" r="4.65" fill="#9c27b0"/><circle cx="976.7" cy="232.1" r="4.65" fill="#9c27b0"/><circle cx="981.3" cy="250.5" r="4.65" fill="#9c27b0"/><circle cx="949.7" cy="259.7" r="4.65" fill="#9c27b0"/><circle cx="983.9" cy="270.3" r="4.65" fill="#9c27b0"/><circle cx="968.2" cy="280.8" r="4.65" fill="#9c27b0"/><circle cx="947.1" cy="284.7" r="4.65" fill="#9c27b0"/><circle cx="940.5" cy="290.7" r="4.65" fill="#9c27b0"/><circle cx="912.2" cy="289.3" r="4.65" fill="#9c27b0"/><circle cx="985.3" cy="290.0" r="4.65" fill="#9c27b0"/><circle cx="939.9" cy="279.5" r="4.65" fill="#9c27b0"/><circle cx="1023.4" cy="238.0" r="4.65" fill="#9c27b0"/><circle cx="1050.7" cy="230.8" r="4.65" fill="#9c27b0"/><circle cx="998.7" cy="255.8" r="4.65" fill="#9c27b0"/><circle cx="999.3" cy="247.9" r="4.65" fill="#9c27b0"/><circle cx="1030.3" cy="263.7" r="4.65" fill="#9c27b0"/><circle cx="1036.8" cy="261.1" r="4.65" fill="#9c27b0"/><circle cx="1049.3" cy="268.9" r="4.65" fill="#9c27b0"/><circle cx="1015.1" cy="265.7" r="4.65" fill="#9c27b0"/><circle cx="1025.0" cy="267.6" r="4.65" fill="#9c27b0"/><circle cx="1005.3" cy="274.9" r="4.65" fill="#9c27b0"/><circle cx="996.1" cy="278.8" r="4.65" fill="#9c27b0"/><circle cx="1022.4" cy="282.1" r="4.65" fill="#9c27b0"/><circle cx="1030.3" cy="287.4" r="4.65" fill="#9c27b0"/><circle cx="1034.2" cy="292.6" r="4.65" fill="#9c27b0"/><circle cx="1011.8" cy="293.9" r="4.65" fill="#9c27b0"/><circle cx="879.7" cy="316.1" r="4.65" fill="#9c27b0"/><circle cx="902.4" cy="314.1" r="4.65" fill="#9c27b0"/><circle cx="881.3" cy="330.5" r="4.65" fill="#9c27b0"/><circle cx="914.2" cy="331.2" r="4.65" fill="#9c27b0"/><circle cx="937.2" cy="320.0" r="4.65" fill="#9c27b0"/><circle cx="947.8" cy="304.9" r="4.65" fill="#9c27b0"/><circle cx="976.1" cy="300.9" r="4.65" fill="#9c27b0"/><circle cx="948.4" cy="335.8" r="4.65" fill="#9c27b0"/><circle cx="901.7" cy="348.9" r="4.65" fill="#9c27b0"/><circle cx="922.1" cy="350.9" r="4.65" fill="#9c27b0"/><circle cx="940.5" cy="351.6" r="4.65" fill="#9c27b0"/><circle cx="986.6" cy="354.2" r="4.65" fill="#9c27b0"/><circle cx="978.7" cy="327.9" r="4.65" fill="#9c27b0"/><circle cx="932.6" cy="367.4" r="4.65" fill="#9c27b0"/><circle cx="953.7" cy="363.4" r="4.65" fill="#9c27b0"/><circle cx="876.1" cy="372.6" r="4.65" fill="#9c27b0"/><circle cx="987.9" cy="297.6" r="4.65" fill="#9c27b0"/><circle cx="985.3" cy="372.6" r="4.65" fill="#9c27b0"/><circle cx="1002.0" cy="312.8" r="4.65" fill="#9c27b0"/><circle cx="1032.2" cy="296.3" r="4.65" fill="#9c27b0"/><circle cx="1050.7" cy="304.2" r="4.65" fill="#9c27b0"/><circle cx="1028.9" cy="345.7" r="4.65" fill="#9c27b0"/><circle cx="1036.8" cy="340.4" r="4.65" fill="#9c27b0"/><circle cx="1003.9" cy="348.3" r="4.65" fill="#9c27b0"/><circle cx="989.5" cy="354.9" r="4.65" fill="#9c27b0"/><circle cx="1050.7" cy="362.4" r="4.65" fill="#9c27b0"/><circle cx="1011.2" cy="372.0" r="4.65" fill="#9c27b0"/><circle cx="1023.7" cy="373.9" r="4.65" fill="#9c27b0"/><circle cx="1014.5" cy="366.7" r="4.65" fill="#9c27b0"/><circle cx="988.2" cy="372.0" r="4.65" fill="#9c27b0"/><circle cx="866.6" cy="382.1" r="4.65" fill="#9c27b0"/><circle cx="876.7" cy="377.2" r="4.65" fill="#9c27b0"/><circle cx="883.9" cy="403.2" r="4.65" fill="#9c27b0"/><circle cx="908.9" cy="378.6" r="4.65" fill="#9c27b0"/><circle cx="898.4" cy="405.5" r="4.65" fill="#9c27b0"/><circle cx="909.3" cy="406.2" r="4.65" fill="#9c27b0"/><circle cx="890.8" cy="416.3" r="4.65" fill="#9c27b0"/><circle cx="855.3" cy="423.3" r="4.65" fill="#9c27b0"/><circle cx="929.3" cy="423.3" r="4.65" fill="#9c27b0"/><circle cx="945.1" cy="425.3" r="4.65" fill="#9c27b0"/><circle cx="964.2" cy="413.4" r="4.65" fill="#9c27b0"/><circle cx="986.6" cy="375.9" r="4.65" fill="#9c27b0"/><circle cx="953.7" cy="434.5" r="4.65" fill="#9c27b0"/><circle cx="984.6" cy="435.1" r="4.65" fill="#9c27b0"/><circle cx="916.8" cy="381.8" r="4.65" fill="#9c27b0"/><circle cx="928.7" cy="390.4" r="4.65" fill="#9c27b0"/><circle cx="975.4" cy="391.1" r="4.65" fill="#9c27b0"/><circle cx="952.4" cy="374.6" r="4.65" fill="#9c27b0"/><circle cx="905.0" cy="430.5" r="4.65" fill="#9c27b0"/><circle cx="1017.1" cy="381.2" r="4.65" fill="#9c27b0"/><circle cx="1050.7" cy="377.2" r="4.65" fill="#9c27b0"/><circle cx="1050.7" cy="383.2" r="4.65" fill="#9c27b0"/><circle cx="992.1" cy="395.0" r="4.65" fill="#9c27b0"/><circle cx="1007.9" cy="398.3" r="4.65" fill="#9c27b0"/><circle cx="1000.7" cy="404.9" r="4.65" fill="#9c27b0"/><circle cx="1018.4" cy="405.5" r="4.65" fill="#9c27b0"/><circle cx="1048.0" cy="397.6" r="4.65" fill="#9c27b0"/><circle cx="1053.9" cy="422.6" r="4.65" fill="#9c27b0"/><circle cx="924.2" cy="299.4" r="4.65" fill="#00acc1"/><circle cx="928.0" cy="300.0" r="4.65" fill="#00acc1"/><circle cx="933.9" cy="299.7" r="4.65" fill="#00acc1"/><circle cx="940.0" cy="298.1" r="4.65" fill="#00acc1"/><circle cx="952.3" cy="298.7" r="4.65" fill="#00acc1"/><circle cx="960.6" cy="302.1" r="4.65" fill="#00acc1"/><circle cx="966.4" cy="299.5" r="4.65" fill="#00acc1"/><circle cx="913.5" cy="306.4" r="4.65" fill="#00acc1"/><circle cx="921.6" cy="305.4" r="4.65" fill="#00acc1"/><circle cx="927.2" cy="304.0" r="4.65" fill="#00acc1"/><circle cx="931.0" cy="304.6" r="4.65" fill="#00acc1"/><circle cx="939.8" cy="305.7" r="4.65" fill="#00acc1"/><circle cx="958.4" cy="306.9" r="4.65" fill="#00acc1"/><circle cx="961.8" cy="306.3" r="4.65" fill="#00acc1"/><circle cx="969.1" cy="307.7" r="4.65" fill="#00acc1"/><circle cx="983.2" cy="304.2" r="4.65" fill="#00acc1"/><circle cx="986.6" cy="307.2" r="4.65" fill="#00acc1"/><circle cx="991.4" cy="305.9" r="4.65" fill="#00acc1"/><circle cx="909.9" cy="312.8" r="4.65" fill="#00acc1"/><circle cx="919.2" cy="312.3" r="4.65" fill="#00acc1"/><circle cx="925.7" cy="311.1" r="4.65" fill="#00acc1"/><circle cx="947.9" cy="312.8" r="4.65" fill="#00acc1"/><circle cx="960.7" cy="314.3" r="4.65" fill="#00acc1"/><circle cx="967.5" cy="311.0" r="4.65" fill="#00acc1"/><circle cx="971.5" cy="312.8" r="4.65" fill="#00acc1"/><circle cx="975.8" cy="311.8" r="4.65" fill="#00acc1"/><circle cx="982.5" cy="310.2" r="4.65" fill="#00acc1"/><circle cx="988.0" cy="313.2" r="4.65" fill="#00acc1"/><circle cx="913.3" cy="316.8" r="4.65" fill="#00acc1"/><circle cx="920.5" cy="319.7" r="4.65" fill="#00acc1"/><circle cx="950.4" cy="319.8" r="4.65" fill="#00acc1"/><circle cx="959.1" cy="316.4" r="4.65" fill="#00acc1"/><circle cx="961.5" cy="316.8" r="4.65" fill="#00acc1"/><circle cx="975.4" cy="316.9" r="4.65" fill="#00acc1"/><circle cx="978.7" cy="317.6" r="4.65" fill="#00acc1"/><circle cx="986.4" cy="318.3" r="4.65" fill="#00acc1"/><circle cx="995.1" cy="318.9" r="4.65" fill="#00acc1"/><circle cx="912.1" cy="324.5" r="4.65" fill="#00acc1"/><circle cx="918.8" cy="321.9" r="4.65" fill="#00acc1"/><circle cx="925.8" cy="325.3" r="4.65" fill="#00acc1"/><circle cx="931.7" cy="325.4" r="4.65" fill="#00acc1"/><circle cx="952.7" cy="322.4" r="4.65" fill="#00acc1"/><circle cx="959.3" cy="321.9" r="4.65" fill="#00acc1"/><circle cx="984.5" cy="322.4" r="4.65" fill="#00acc1"/><circle cx="988.9" cy="323.3" r="4.65" fill="#00acc1"/><circle cx="922.6" cy="332.3" r="4.65" fill="#00acc1"/><circle cx="926.8" cy="329.9" r="4.65" fill="#00acc1"/><circle cx="931.1" cy="328.2" r="4.65" fill="#00acc1"/><circle cx="938.3" cy="328.9" r="4.65" fill="#00acc1"/><circle cx="946.5" cy="328.4" r="4.65" fill="#00acc1"/><circle cx="957.1" cy="328.4" r="4.65" fill="#00acc1"/><circle cx="969.1" cy="332.2" r="4.65" fill="#00acc1"/><circle cx="985.5" cy="331.3" r="4.65" fill="#00acc1"/><circle cx="911.2" cy="334.7" r="4.65" fill="#00acc1"/><circle cx="919.4" cy="338.2" r="4.65" fill="#00acc1"/><circle cx="925.6" cy="337.4" r="4.65" fill="#00acc1"/><circle cx="931.5" cy="337.1" r="4.65" fill="#00acc1"/><circle cx="934.7" cy="336.1" r="4.65" fill="#00acc1"/><circle cx="941.3" cy="333.8" r="4.65" fill="#00acc1"/><circle cx="962.1" cy="335.8" r="4.65" fill="#00acc1"/><circle cx="968.0" cy="338.2" r="4.65" fill="#00acc1"/><circle cx="974.1" cy="335.4" r="4.65" fill="#00acc1"/><circle cx="976.7" cy="334.7" r="4.65" fill="#00acc1"/><circle cx="982.6" cy="334.6" r="4.65" fill="#00acc1"/><circle cx="990.6" cy="337.8" r="4.65" fill="#00acc1"/><circle cx="916.6" cy="341.9" r="4.65" fill="#00acc1"/><circle cx="921.7" cy="343.4" r="4.65" fill="#00acc1"/><circle cx="925.1" cy="342.7" r="4.65" fill="#00acc1"/><circle cx="934.9" cy="343.3" r="4.65" fill="#00acc1"/><circle cx="940.2" cy="341.9" r="4.65" fill="#00acc1"/><circle cx="943.5" cy="343.3" r="4.65" fill="#00acc1"/><circle cx="970.0" cy="340.5" r="4.65" fill="#00acc1"/><circle cx="973.3" cy="340.4" r="4.65" fill="#00acc1"/><circle cx="982.9" cy="343.4" r="4.65" fill="#00acc1"/><circle cx="995.2" cy="342.7" r="4.65" fill="#00acc1"/><circle cx="911.3" cy="348.2" r="4.65" fill="#00acc1"/><circle cx="916.3" cy="345.8" r="4.65" fill="#00acc1"/><circle cx="930.1" cy="350.0" r="4.65" fill="#00acc1"/><circle cx="946.9" cy="347.0" r="4.65" fill="#00acc1"/><circle cx="952.8" cy="348.4" r="4.65" fill="#00acc1"/><circle cx="964.3" cy="349.9" r="4.65" fill="#00acc1"/><circle cx="971.3" cy="347.8" r="4.65" fill="#00acc1"/><circle cx="978.4" cy="349.9" r="4.65" fill="#00acc1"/><circle cx="915.1" cy="351.8" r="4.65" fill="#00acc1"/><circle cx="931.5" cy="353.9" r="4.65" fill="#00acc1"/><circle cx="951.3" cy="355.3" r="4.65" fill="#00acc1"/><circle cx="955.2" cy="354.3" r="4.65" fill="#00acc1"/><circle cx="961.8" cy="353.0" r="4.65" fill="#00acc1"/><circle cx="970.3" cy="354.0" r="4.65" fill="#00acc1"/><circle cx="975.3" cy="355.2" r="4.65" fill="#00acc1"/><circle cx="924.9" cy="361.7" r="4.65" fill="#00acc1"/><circle cx="932.0" cy="358.9" r="4.65" fill="#00acc1"/><circle cx="936.3" cy="362.0" r="4.65" fill="#00acc1"/><circle cx="946.3" cy="359.7" r="4.65" fill="#00acc1"/><circle cx="978.7" cy="358.4" r="4.65" fill="#00acc1"/><circle cx="985.8" cy="362.2" r="4.65" fill="#00acc1"/><circle cx="988.7" cy="362.1" r="4.65" fill="#00acc1"/><circle cx="925.4" cy="365.7" r="4.65" fill="#00acc1"/><circle cx="946.0" cy="363.8" r="4.65" fill="#00acc1"/><circle cx="967.0" cy="368.2" r="4.65" fill="#00acc1"/><circle cx="976.3" cy="368.2" r="4.65" fill="#00acc1"/><circle cx="979.2" cy="364.9" r="4.65" fill="#00acc1"/><circle cx="984.9" cy="367.3" r="4.65" fill="#00acc1"/><circle cx="991.9" cy="364.3" r="4.65" fill="#00acc1"/><circle cx="911.6" cy="373.9" r="4.65" fill="#00acc1"/><circle cx="922.4" cy="373.9" r="4.65" fill="#00acc1"/><circle cx="942.9" cy="371.7" r="4.65" fill="#00acc1"/><circle cx="946.0" cy="374.0" r="4.65" fill="#00acc1"/><circle cx="958.1" cy="373.6" r="4.65" fill="#00acc1"/><circle cx="964.0" cy="373.7" r="4.65" fill="#00acc1"/><circle cx="971.8" cy="371.3" r="4.65" fill="#00acc1"/><circle cx="978.2" cy="374.0" r="4.65" fill="#00acc1"/><circle cx="982.9" cy="370.3" r="4.65" fill="#00acc1"/><circle cx="990.1" cy="370.8" r="4.65" fill="#00acc1"/><circle cx="926.1" cy="233.1" r="4.65" fill="#00acc1"/><circle cx="934.2" cy="233.0" r="4.65" fill="#00acc1"/><circle cx="939.0" cy="232.5" r="4.65" fill="#00acc1"/><circle cx="944.3" cy="231.8" r="4.65" fill="#00acc1"/><circle cx="949.9" cy="231.8" r="4.65" fill="#00acc1"/><circle cx="958.1" cy="234.2" r="4.65" fill="#00acc1"/><circle cx="961.6" cy="233.9" r="4.65" fill="#00acc1"/><circle cx="986.5" cy="234.0" r="4.65" fill="#00acc1"/><circle cx="993.9" cy="236.2" r="4.65" fill="#00acc1"/><circle cx="911.3" cy="241.5" r="4.65" fill="#00acc1"/><circle cx="923.6" cy="239.3" r="4.65" fill="#00acc1"/><circle cx="928.0" cy="238.3" r="4.65" fill="#00acc1"/><circle cx="955.7" cy="240.8" r="4.65" fill="#00acc1"/><circle cx="959.0" cy="238.8" r="4.65" fill="#00acc1"/><circle cx="965.0" cy="239.8" r="4.65" fill="#00acc1"/><circle cx="970.4" cy="239.8" r="4.65" fill="#00acc1"/><circle cx="976.9" cy="242.1" r="4.65" fill="#00acc1"/><circle cx="926.9" cy="246.0" r="4.65" fill="#00acc1"/><circle cx="956.1" cy="244.8" r="4.65" fill="#00acc1"/><circle cx="970.2" cy="246.7" r="4.65" fill="#00acc1"/><circle cx="976.0" cy="247.7" r="4.65" fill="#00acc1"/><circle cx="994.0" cy="246.7" r="4.65" fill="#00acc1"/><circle cx="909.9" cy="253.5" r="4.65" fill="#00acc1"/><circle cx="919.8" cy="252.6" r="4.65" fill="#00acc1"/><circle cx="925.1" cy="253.4" r="4.65" fill="#00acc1"/><circle cx="943.4" cy="253.5" r="4.65" fill="#00acc1"/><circle cx="948.4" cy="253.8" r="4.65" fill="#00acc1"/><circle cx="954.8" cy="252.9" r="4.65" fill="#00acc1"/><circle cx="958.8" cy="249.8" r="4.65" fill="#00acc1"/><circle cx="990.0" cy="249.7" r="4.65" fill="#00acc1"/><circle cx="916.4" cy="259.1" r="4.65" fill="#00acc1"/><circle cx="921.0" cy="258.2" r="4.65" fill="#00acc1"/><circle cx="927.7" cy="256.0" r="4.65" fill="#00acc1"/><circle cx="957.0" cy="257.5" r="4.65" fill="#00acc1"/><circle cx="970.2" cy="258.5" r="4.65" fill="#00acc1"/><circle cx="975.7" cy="256.1" r="4.65" fill="#00acc1"/><circle cx="979.4" cy="256.9" r="4.65" fill="#00acc1"/><circle cx="988.1" cy="257.1" r="4.65" fill="#00acc1"/><circle cx="910.0" cy="262.9" r="4.65" fill="#00acc1"/><circle cx="918.8" cy="264.9" r="4.65" fill="#00acc1"/><circle cx="924.8" cy="263.0" r="4.65" fill="#00acc1"/><circle cx="930.1" cy="263.8" r="4.65" fill="#00acc1"/><circle cx="943.8" cy="262.6" r="4.65" fill="#00acc1"/><circle cx="950.2" cy="266.0" r="4.65" fill="#00acc1"/><circle cx="961.5" cy="266.2" r="4.65" fill="#00acc1"/><circle cx="965.8" cy="262.9" r="4.65" fill="#00acc1"/><circle cx="970.7" cy="266.0" r="4.65" fill="#00acc1"/><circle cx="976.7" cy="264.4" r="4.65" fill="#00acc1"/><circle cx="982.4" cy="264.1" r="4.65" fill="#00acc1"/><circle cx="916.5" cy="270.0" r="4.65" fill="#00acc1"/><circle cx="922.8" cy="270.9" r="4.65" fill="#00acc1"/><circle cx="932.9" cy="267.8" r="4.65" fill="#00acc1"/><circle cx="944.8" cy="269.1" r="4.65" fill="#00acc1"/><circle cx="949.3" cy="269.3" r="4.65" fill="#00acc1"/><circle cx="956.2" cy="271.6" r="4.65" fill="#00acc1"/><circle cx="960.7" cy="271.2" r="4.65" fill="#00acc1"/><circle cx="970.6" cy="268.3" r="4.65" fill="#00acc1"/><circle cx="977.0" cy="271.0" r="4.65" fill="#00acc1"/><circle cx="995.3" cy="270.4" r="4.65" fill="#00acc1"/><circle cx="911.4" cy="275.7" r="4.65" fill="#00acc1"/><circle cx="917.0" cy="273.9" r="4.65" fill="#00acc1"/><circle cx="922.2" cy="277.5" r="4.65" fill="#00acc1"/><circle cx="947.4" cy="278.1" r="4.65" fill="#00acc1"/><circle cx="955.8" cy="277.4" r="4.65" fill="#00acc1"/><circle cx="960.6" cy="277.9" r="4.65" fill="#00acc1"/><circle cx="973.0" cy="273.9" r="4.65" fill="#00acc1"/><circle cx="979.1" cy="275.8" r="4.65" fill="#00acc1"/><circle cx="985.2" cy="276.7" r="4.65" fill="#00acc1"/><circle cx="917.0" cy="280.3" r="4.65" fill="#00acc1"/><circle cx="920.9" cy="281.3" r="4.65" fill="#00acc1"/><circle cx="926.1" cy="283.1" r="4.65" fill="#00acc1"/><circle cx="955.7" cy="283.9" r="4.65" fill="#00acc1"/><circle cx="974.8" cy="280.3" r="4.65" fill="#00acc1"/><circle cx="979.6" cy="280.1" r="4.65" fill="#00acc1"/><circle cx="986.3" cy="280.1" r="4.65" fill="#00acc1"/><circle cx="923.6" cy="288.1" r="4.65" fill="#00acc1"/><circle cx="929.4" cy="287.3" r="4.65" fill="#00acc1"/><circle cx="934.0" cy="287.0" r="4.65" fill="#00acc1"/><circle cx="955.7" cy="286.7" r="4.65" fill="#00acc1"/><circle cx="958.9" cy="286.8" r="4.65" fill="#00acc1"/><circle cx="965.5" cy="287.8" r="4.65" fill="#00acc1"/><circle cx="974.1" cy="289.6" r="4.65" fill="#00acc1"/><circle cx="979.7" cy="285.8" r="4.65" fill="#00acc1"/><circle cx="991.8" cy="287.9" r="4.65" fill="#00acc1"/><circle cx="928.5" cy="295.6" r="4.65" fill="#00acc1"/><circle cx="945.1" cy="294.8" r="4.65" fill="#00acc1"/><circle cx="953.0" cy="295.0" r="4.65" fill="#00acc1"/><circle cx="957.7" cy="295.2" r="4.65" fill="#00acc1"/><circle cx="962.8" cy="294.2" r="4.65" fill="#00acc1"/><circle cx="966.9" cy="295.3" r="4.65" fill="#00acc1"/><circle cx="993.6" cy="294.9" r="4.65" fill="#00acc1"/><circle cx="997.2" cy="232.0" r="4.65" fill="#00acc1"/><circle cx="1005.1" cy="234.4" r="4.65" fill="#00acc1"/><circle cx="1010.5" cy="232.7" r="4.65" fill="#00acc1"/><circle cx="1017.5" cy="231.7" r="4.65" fill="#00acc1"/><circle cx="995.1" cy="239.8" r="4.65" fill="#00acc1"/><circle cx="1004.1" cy="240.7" r="4.65" fill="#00acc1"/><circle cx="1009.8" cy="239.9" r="4.65" fill="#00acc1"/><circle cx="1012.8" cy="238.8" r="4.65" fill="#00acc1"/><circle cx="1004.1" cy="243.8" r="4.65" fill="#00acc1"/><circle cx="1011.0" cy="246.8" r="4.65" fill="#00acc1"/><circle cx="1016.6" cy="244.9" r="4.65" fill="#00acc1"/><circle cx="1007.3" cy="251.6" r="4.65" fill="#00acc1"/><circle cx="1014.8" cy="250.6" r="4.65" fill="#00acc1"/><circle cx="1005.0" cy="256.6" r="4.65" fill="#00acc1"/><circle cx="1013.2" cy="257.1" r="4.65" fill="#00acc1"/><circle cx="1018.5" cy="256.8" r="4.65" fill="#00acc1"/><circle cx="1001.1" cy="266.1" r="4.65" fill="#00acc1"/><circle cx="1008.0" cy="262.6" r="4.65" fill="#00acc1"/><circle cx="999.8" cy="272.1" r="4.65" fill="#00acc1"/><circle cx="994.0" cy="299.5" r="4.65" fill="#00acc1"/><circle cx="994.6" cy="326.0" r="4.65" fill="#00acc1"/><circle cx="1000.1" cy="327.8" r="4.65" fill="#00acc1"/><circle cx="996.8" cy="335.4" r="4.65" fill="#00acc1"/><circle cx="938.4" cy="377.2" r="4.65" fill="#00acc1"/><circle cx="943.5" cy="375.7" r="4.65" fill="#00acc1"/><circle cx="959.1" cy="376.3" r="4.65" fill="#00acc1"/><circle cx="965.1" cy="376.7" r="4.65" fill="#00acc1"/><circle cx="968.3" cy="379.5" r="4.65" fill="#00acc1"/><circle cx="976.5" cy="377.7" r="4.65" fill="#00acc1"/><circle cx="978.9" cy="377.9" r="4.65" fill="#00acc1"/><circle cx="937.8" cy="381.8" r="4.65" fill="#00acc1"/><circle cx="941.6" cy="385.4" r="4.65" fill="#00acc1"/><circle cx="967.1" cy="385.8" r="4.65" fill="#00acc1"/><circle cx="971.3" cy="383.0" r="4.65" fill="#00acc1"/><circle cx="980.1" cy="384.5" r="4.65" fill="#00acc1"/><circle cx="982.9" cy="385.0" r="4.65" fill="#00acc1"/><circle cx="989.2" cy="383.0" r="4.65" fill="#00acc1"/><circle cx="936.7" cy="391.2" r="4.65" fill="#00acc1"/><circle cx="953.0" cy="387.8" r="4.65" fill="#00acc1"/><circle cx="965.1" cy="392.1" r="4.65" fill="#00acc1"/><circle cx="968.5" cy="388.9" r="4.65" fill="#00acc1"/><circle cx="983.0" cy="388.5" r="4.65" fill="#00acc1"/><circle cx="988.4" cy="391.1" r="4.65" fill="#00acc1"/><circle cx="994.5" cy="391.3" r="4.65" fill="#00acc1"/><circle cx="936.5" cy="395.2" r="4.65" fill="#00acc1"/><circle cx="952.6" cy="397.2" r="4.65" fill="#00acc1"/><circle cx="958.8" cy="394.0" r="4.65" fill="#00acc1"/><circle cx="963.9" cy="396.2" r="4.65" fill="#00acc1"/><circle cx="971.2" cy="398.2" r="4.65" fill="#00acc1"/><circle cx="979.8" cy="398.2" r="4.65" fill="#00acc1"/><circle cx="988.1" cy="396.0" r="4.65" fill="#00acc1"/><circle cx="940.0" cy="401.8" r="4.65" fill="#00acc1"/><circle cx="951.6" cy="402.8" r="4.65" fill="#00acc1"/><circle cx="958.1" cy="403.6" r="4.65" fill="#00acc1"/><circle cx="963.8" cy="400.3" r="4.65" fill="#00acc1"/><circle cx="970.6" cy="401.1" r="4.65" fill="#00acc1"/><circle cx="975.3" cy="401.4" r="4.65" fill="#00acc1"/><circle cx="982.1" cy="400.6" r="4.65" fill="#00acc1"/><circle cx="985.8" cy="400.8" r="4.65" fill="#00acc1"/><circle cx="991.4" cy="403.8" r="4.65" fill="#00acc1"/><circle cx="941.5" cy="410.3" r="4.65" fill="#00acc1"/><circle cx="948.0" cy="406.8" r="4.65" fill="#00acc1"/><circle cx="955.4" cy="408.7" r="4.65" fill="#00acc1"/><circle cx="962.3" cy="406.2" r="4.65" fill="#00acc1"/><circle cx="973.6" cy="409.9" r="4.65" fill="#00acc1"/><circle cx="975.9" cy="407.1" r="4.65" fill="#00acc1"/><circle cx="982.2" cy="406.6" r="4.65" fill="#00acc1"/><circle cx="941.0" cy="413.4" r="4.65" fill="#00acc1"/><circle cx="946.7" cy="413.8" r="4.65" fill="#00acc1"/><circle cx="949.9" cy="415.3" r="4.65" fill="#00acc1"/><circle cx="973.4" cy="412.6" r="4.65" fill="#00acc1"/><circle cx="990.8" cy="413.2" r="4.65" fill="#00acc1"/><circle cx="936.8" cy="418.6" r="4.65" fill="#00acc1"/><circle cx="952.0" cy="418.2" r="4.65" fill="#00acc1"/><circle cx="959.5" cy="420.2" r="4.65" fill="#00acc1"/><circle cx="970.5" cy="420.9" r="4.65" fill="#00acc1"/><circle cx="983.1" cy="422.1" r="4.65" fill="#00acc1"/><circle cx="989.1" cy="420.3" r="4.65" fill="#00acc1"/><circle cx="938.3" cy="425.6" r="4.65" fill="#00acc1"/><circle cx="950.4" cy="424.6" r="4.65" fill="#00acc1"/><circle cx="958.0" cy="424.6" r="4.65" fill="#00acc1"/><circle cx="960.7" cy="427.8" r="4.65" fill="#00acc1"/><circle cx="968.6" cy="427.5" r="4.65" fill="#00acc1"/><circle cx="974.6" cy="427.8" r="4.65" fill="#00acc1"/><circle cx="980.8" cy="424.4" r="4.65" fill="#00acc1"/><circle cx="984.8" cy="426.2" r="4.65" fill="#00acc1"/><circle cx="993.6" cy="427.9" r="4.65" fill="#00acc1"/><circle cx="934.1" cy="432.6" r="4.65" fill="#00acc1"/><circle cx="941.4" cy="432.0" r="4.65" fill="#00acc1"/><circle cx="954.1" cy="434.0" r="4.65" fill="#00acc1"/><circle cx="958.2" cy="432.0" r="4.65" fill="#00acc1"/><circle cx="967.4" cy="434.1" r="4.65" fill="#00acc1"/><circle cx="970.6" cy="430.3" r="4.65" fill="#00acc1"/><circle cx="980.0" cy="434.2" r="4.65" fill="#00acc1"/><circle cx="983.9" cy="429.9" r="4.65" fill="#00acc1"/><circle cx="992.0" cy="431.5" r="4.65" fill="#00acc1"/><circle cx="854.3" cy="231.1" r="4.65" fill="#00acc1"/><circle cx="876.1" cy="236.7" r="4.65" fill="#00acc1"/><circle cx="881.7" cy="250.3" r="4.65" fill="#00acc1"/><circle cx="850.1" cy="266.3" r="4.65" fill="#00acc1"/><circle cx="867.5" cy="276.2" r="4.65" fill="#00acc1"/><circle cx="851.3" cy="291.1" r="4.65" fill="#00acc1"/><circle cx="859.2" cy="290.0" r="4.65" fill="#00acc1"/><circle cx="891.4" cy="240.0" r="4.65" fill="#00acc1"/><circle cx="895.8" cy="247.2" r="4.65" fill="#00acc1"/><circle cx="891.2" cy="251.8" r="4.65" fill="#00acc1"/><circle cx="903.0" cy="250.3" r="4.65" fill="#00acc1"/><circle cx="887.5" cy="265.7" r="4.65" fill="#00acc1"/><circle cx="887.9" cy="272.9" r="4.65" fill="#00acc1"/><circle cx="884.6" cy="280.5" r="4.65" fill="#00acc1"/><circle cx="885.3" cy="290.7" r="4.65" fill="#00acc1"/><circle cx="899.1" cy="229.2" r="4.65" fill="#00acc1"/><circle cx="905.7" cy="229.5" r="4.65" fill="#00acc1"/><circle cx="903.7" cy="234.1" r="4.65" fill="#00acc1"/><circle cx="915.5" cy="230.8" r="4.65" fill="#00acc1"/><circle cx="920.8" cy="228.2" r="4.65" fill="#00acc1"/><circle cx="927.4" cy="226.8" r="4.65" fill="#00acc1"/><circle cx="932.6" cy="229.5" r="4.65" fill="#00acc1"/><circle cx="939.2" cy="226.2" r="4.65" fill="#00acc1"/><circle cx="944.5" cy="228.8" r="4.65" fill="#00acc1"/><circle cx="953.7" cy="228.2" r="4.65" fill="#00acc1"/><circle cx="960.3" cy="225.5" r="4.65" fill="#00acc1"/><circle cx="965.5" cy="229.5" r="4.65" fill="#00acc1"/><circle cx="970.1" cy="226.6" r="4.65" fill="#00acc1"/><circle cx="984.6" cy="226.8" r="4.65" fill="#00acc1"/><circle cx="990.0" cy="228.2" r="4.65" fill="#00acc1"/><circle cx="908.9" cy="243.3" r="4.65" fill="#00acc1"/><circle cx="914.2" cy="238.7" r="4.65" fill="#00acc1"/><circle cx="911.6" cy="247.9" r="4.65" fill="#00acc1"/><circle cx="924.7" cy="236.1" r="4.65" fill="#00acc1"/><circle cx="927.4" cy="241.3" r="4.65" fill="#00acc1"/><circle cx="922.1" cy="241.3" r="4.65" fill="#00acc1"/><circle cx="931.3" cy="234.7" r="4.65" fill="#00acc1"/><circle cx="936.6" cy="240.0" r="4.65" fill="#00acc1"/><circle cx="939.2" cy="233.4" r="4.65" fill="#00acc1"/><circle cx="947.1" cy="233.4" r="4.65" fill="#00acc1"/><circle cx="952.4" cy="234.7" r="4.65" fill="#00acc1"/><circle cx="958.9" cy="233.4" r="4.65" fill="#00acc1"/><circle cx="962.9" cy="237.4" r="4.65" fill="#00acc1"/><circle cx="948.4" cy="242.6" r="4.65" fill="#00acc1"/><circle cx="956.3" cy="241.3" r="4.65" fill="#00acc1"/><circle cx="972.8" cy="239.3" r="4.65" fill="#00acc1"/><circle cx="980.0" cy="235.4" r="4.65" fill="#00acc1"/><circle cx="986.6" cy="234.7" r="4.65" fill="#00acc1"/><circle cx="970.1" cy="245.9" r="4.65" fill="#00acc1"/><circle cx="983.3" cy="245.3" r="4.65" fill="#00acc1"/><circle cx="987.9" cy="249.2" r="4.65" fill="#00acc1"/><circle cx="920.8" cy="249.2" r="4.65" fill="#00acc1"/><circle cx="926.1" cy="246.6" r="4.65" fill="#00acc1"/><circle cx="924.7" cy="254.5" r="4.65" fill="#00acc1"/><circle cx="930.0" cy="257.1" r="4.65" fill="#00acc1"/><circle cx="938.6" cy="249.9" r="4.65" fill="#00acc1"/><circle cx="943.2" cy="254.5" r="4.65" fill="#00acc1"/><circle cx="948.4" cy="250.5" r="4.65" fill="#00acc1"/><circle cx="955.0" cy="249.2" r="4.65" fill="#00acc1"/><circle cx="960.3" cy="253.2" r="4.65" fill="#00acc1"/><circle cx="956.3" cy="258.4" r="4.65" fill="#00acc1"/><circle cx="974.1" cy="251.2" r="4.65" fill="#00acc1"/><circle cx="970.8" cy="258.4" r="4.65" fill="#00acc1"/><circle cx="980.0" cy="258.4" r="4.65" fill="#00acc1"/><circle cx="986.6" cy="258.4" r="4.65" fill="#00acc1"/><circle cx="987.9" cy="265.0" r="4.65" fill="#00acc1"/><circle cx="908.9" cy="258.4" r="4.65" fill="#00acc1"/><circle cx="905.0" cy="266.3" r="4.65" fill="#00acc1"/><circle cx="905.7" cy="262.4" r="4.65" fill="#00acc1"/><circle cx="915.5" cy="265.7" r="4.65" fill="#00acc1"/><circle cx="914.2" cy="271.6" r="4.65" fill="#00acc1"/><circle cx="922.1" cy="263.7" r="4.65" fill="#00acc1"/><circle cx="926.7" cy="268.9" r="4.65" fill="#00acc1"/><circle cx="930.0" cy="263.7" r="4.65" fill="#00acc1"/><circle cx="946.4" cy="264.3" r="4.65" fill="#00acc1"/><circle cx="935.3" cy="270.9" r="4.65" fill="#00acc1"/><circle cx="941.8" cy="271.6" r="4.65" fill="#00acc1"/><circle cx="948.4" cy="272.9" r="4.65" fill="#00acc1"/><circle cx="956.3" cy="266.3" r="4.65" fill="#00acc1"/><circle cx="955.0" cy="274.2" r="4.65" fill="#00acc1"/><circle cx="961.6" cy="272.9" r="4.65" fill="#00acc1"/><circle cx="966.8" cy="266.3" r="4.65" fill="#00acc1"/><circle cx="972.1" cy="270.3" r="4.65" fill="#00acc1"/><circle cx="974.7" cy="265.0" r="4.65" fill="#00acc1"/><circle cx="978.7" cy="274.2" r="4.65" fill="#00acc1"/><circle cx="985.3" cy="276.8" r="4.65" fill="#00acc1"/><circle cx="891.8" cy="276.8" r="4.65" fill="#00acc1"/><circle cx="895.8" cy="282.1" r="4.65" fill="#00acc1"/><circle cx="901.1" cy="280.8" r="4.65" fill="#00acc1"/><circle cx="908.9" cy="280.1" r="4.65" fill="#00acc1"/><circle cx="915.5" cy="276.8" r="4.65" fill="#00acc1"/><circle cx="922.1" cy="279.5" r="4.65" fill="#00acc1"/><circle cx="891.8" cy="288.7" r="4.65" fill="#00acc1"/><circle cx="898.4" cy="290.0" r="4.65" fill="#00acc1"/><circle cx="906.3" cy="286.7" r="4.65" fill="#00acc1"/><circle cx="908.9" cy="292.6" r="4.65" fill="#00acc1"/><circle cx="919.5" cy="283.4" r="4.65" fill="#00acc1"/><circle cx="926.1" cy="282.1" r="4.65" fill="#00acc1"/><circle cx="928.7" cy="288.0" r="4.65" fill="#00acc1"/><circle cx="933.9" cy="283.4" r="4.65" fill="#00acc1"/><circle cx="940.5" cy="283.4" r="4.65" fill="#00acc1"/><circle cx="924.7" cy="292.6" r="4.65" fill="#00acc1"/><circle cx="932.6" cy="292.6" r="4.65" fill="#00acc1"/><circle cx="948.4" cy="291.3" r="4.65" fill="#00acc1"/><circle cx="953.7" cy="287.4" r="4.65" fill="#00acc1"/><circle cx="961.6" cy="283.4" r="4.65" fill="#00acc1"/><circle cx="961.6" cy="291.3" r="4.65" fill="#00acc1"/><circle cx="969.5" cy="288.7" r="4.65" fill="#00acc1"/><circle cx="974.7" cy="282.1" r="4.65" fill="#00acc1"/><circle cx="980.0" cy="286.1" r="4.65" fill="#00acc1"/><circle cx="977.4" cy="292.6" r="4.65" fill="#00acc1"/><circle cx="987.9" cy="282.1" r="4.65" fill="#00acc1"/><circle cx="989.2" cy="288.7" r="4.65" fill="#00acc1"/><circle cx="916.8" cy="257.1" r="4.65" fill="#00acc1"/><circle cx="964.2" cy="261.1" r="4.65" fill="#00acc1"/><circle cx="982.6" cy="267.6" r="4.65" fill="#00acc1"/><circle cx="943.2" cy="276.8" r="4.65" fill="#00acc1"/><circle cx="914.2" cy="286.7" r="4.65" fill="#00acc1"/><circle cx="966.8" cy="276.2" r="4.65" fill="#00acc1"/><circle cx="994.7" cy="232.1" r="4.65" fill="#00acc1"/><circle cx="1003.3" cy="226.2" r="4.65" fill="#00acc1"/><circle cx="1006.6" cy="230.8" r="4.65" fill="#00acc1"/><circle cx="1011.8" cy="234.7" r="4.65" fill="#00acc1"/><circle cx="989.5" cy="236.1" r="4.65" fill="#00acc1"/><circle cx="996.1" cy="241.3" r="4.65" fill="#00acc1"/><circle cx="1001.3" cy="237.4" r="4.65" fill="#00acc1"/><circle cx="1007.9" cy="241.3" r="4.65" fill="#00acc1"/><circle cx="1015.8" cy="241.3" r="4.65" fill="#00acc1"/><circle cx="1025.0" cy="243.3" r="4.65" fill="#00acc1"/><circle cx="1030.9" cy="243.3" r="4.65" fill="#00acc1"/><circle cx="1006.6" cy="247.9" r="4.65" fill="#00acc1"/><circle cx="996.1" cy="250.5" r="4.65" fill="#00acc1"/><circle cx="1005.3" cy="254.5" r="4.65" fill="#00acc1"/><circle cx="1013.2" cy="251.8" r="4.65" fill="#00acc1"/><circle cx="1018.4" cy="255.8" r="4.65" fill="#00acc1"/><circle cx="1030.3" cy="255.1" r="4.65" fill="#00acc1"/><circle cx="1000.0" cy="262.4" r="4.65" fill="#00acc1"/><circle cx="1005.3" cy="265.0" r="4.65" fill="#00acc1"/><circle cx="1021.1" cy="262.4" r="4.65" fill="#00acc1"/><circle cx="1018.4" cy="271.6" r="4.65" fill="#00acc1"/><circle cx="998.7" cy="270.3" r="4.65" fill="#00acc1"/><circle cx="1013.2" cy="282.1" r="4.65" fill="#00acc1"/><circle cx="1015.8" cy="288.7" r="4.65" fill="#00acc1"/><circle cx="999.3" cy="285.4" r="4.65" fill="#00acc1"/><circle cx="993.4" cy="287.4" r="4.65" fill="#00acc1"/><circle cx="1027.0" cy="290.0" r="4.65" fill="#00acc1"/><circle cx="1003.9" cy="292.6" r="4.65" fill="#00acc1"/><circle cx="1042.1" cy="225.5" r="4.65" fill="#00acc1"/><circle cx="1040.8" cy="234.1" r="4.65" fill="#00acc1"/><circle cx="1051.1" cy="234.1" r="4.65" fill="#00acc1"/><circle cx="1051.1" cy="238.7" r="4.65" fill="#00acc1"/><circle cx="1046.7" cy="255.5" r="4.65" fill="#00acc1"/><circle cx="1052.0" cy="255.5" r="4.65" fill="#00acc1"/><circle cx="1050.7" cy="263.9" r="4.65" fill="#00acc1"/><circle cx="1045.1" cy="286.7" r="4.65" fill="#00acc1"/><circle cx="1040.8" cy="293.3" r="4.65" fill="#00acc1"/><circle cx="1051.3" cy="295.0" r="4.65" fill="#00acc1"/><circle cx="990.8" cy="276.8" r="4.65" fill="#00acc1"/><circle cx="989.5" cy="267.6" r="4.65" fill="#00acc1"/><circle cx="1009.2" cy="259.7" r="4.65" fill="#00acc1"/><circle cx="1017.1" cy="268.9" r="4.65" fill="#00acc1"/><circle cx="1021.7" cy="267.0" r="4.65" fill="#00acc1"/><circle cx="1007.9" cy="271.6" r="4.65" fill="#00acc1"/><circle cx="1027.6" cy="249.2" r="4.65" fill="#00acc1"/><circle cx="844.5" cy="304.5" r="4.65" fill="#00acc1"/><circle cx="853.0" cy="309.5" r="4.65" fill="#00acc1"/><circle cx="849.1" cy="313.4" r="4.65" fill="#00acc1"/><circle cx="871.4" cy="310.5" r="4.65" fill="#00acc1"/><circle cx="859.2" cy="320.7" r="4.65" fill="#00acc1"/><circle cx="870.8" cy="320.7" r="4.65" fill="#00acc1"/><circle cx="868.2" cy="325.9" r="4.65" fill="#00acc1"/><circle cx="848.4" cy="331.2" r="4.65" fill="#00acc1"/><circle cx="866.2" cy="334.5" r="4.65" fill="#00acc1"/><circle cx="847.4" cy="340.4" r="4.65" fill="#00acc1"/><circle cx="863.6" cy="341.7" r="4.65" fill="#00acc1"/><circle cx="849.5" cy="359.5" r="4.65" fill="#00acc1"/><circle cx="844.7" cy="366.1" r="4.65" fill="#00acc1"/><circle cx="870.1" cy="356.8" r="4.65" fill="#00acc1"/><circle cx="881.6" cy="360.8" r="4.65" fill="#00acc1"/><circle cx="855.3" cy="372.0" r="4.65" fill="#00acc1"/><circle cx="872.1" cy="371.3" r="4.65" fill="#00acc1"/><circle cx="879.3" cy="339.7" r="4.65" fill="#00acc1"/><circle cx="886.6" cy="338.4" r="4.65" fill="#00acc1"/><circle cx="893.2" cy="333.2" r="4.65" fill="#00acc1"/><circle cx="883.9" cy="329.2" r="4.65" fill="#00acc1"/><circle cx="885.3" cy="323.3" r="4.65" fill="#00acc1"/><circle cx="893.6" cy="318.0" r="4.65" fill="#00acc1"/><circle cx="879.3" cy="302.9" r="4.65" fill="#00acc1"/><circle cx="886.6" cy="300.3" r="4.65" fill="#00acc1"/><circle cx="889.2" cy="308.8" r="4.65" fill="#00acc1"/><circle cx="898.4" cy="323.9" r="4.65" fill="#00acc1"/><circle cx="882.6" cy="370.0" r="4.65" fill="#00acc1"/><circle cx="889.9" cy="370.0" r="4.65" fill="#00acc1"/><circle cx="897.1" cy="363.4" r="4.65" fill="#00acc1"/><circle cx="901.1" cy="359.5" r="4.65" fill="#00acc1"/><circle cx="895.8" cy="297.6" r="4.65" fill="#00acc1"/><circle cx="903.7" cy="298.9" r="4.65" fill="#00acc1"/><circle cx="910.3" cy="300.3" r="4.65" fill="#00acc1"/><circle cx="924.7" cy="297.6" r="4.65" fill="#00acc1"/><circle cx="932.6" cy="296.3" r="4.65" fill="#00acc1"/><circle cx="940.5" cy="298.9" r="4.65" fill="#00acc1"/><circle cx="955.0" cy="298.9" r="4.65" fill="#00acc1"/><circle cx="961.6" cy="301.6" r="4.65" fill="#00acc1"/><circle cx="969.5" cy="297.6" r="4.65" fill="#00acc1"/><circle cx="981.3" cy="302.9" r="4.65" fill="#00acc1"/><circle cx="989.2" cy="305.5" r="4.65" fill="#00acc1"/><circle cx="899.7" cy="305.5" r="4.65" fill="#00acc1"/><circle cx="907.6" cy="306.8" r="4.65" fill="#00acc1"/><circle cx="915.5" cy="305.5" r="4.65" fill="#00acc1"/><circle cx="926.1" cy="305.5" r="4.65" fill="#00acc1"/><circle cx="933.9" cy="310.8" r="4.65" fill="#00acc1"/><circle cx="939.2" cy="304.2" r="4.65" fill="#00acc1"/><circle cx="948.4" cy="312.1" r="4.65" fill="#00acc1"/><circle cx="955.0" cy="309.5" r="4.65" fill="#00acc1"/><circle cx="962.9" cy="308.2" r="4.65" fill="#00acc1"/><circle cx="969.5" cy="306.8" r="4.65" fill="#00acc1"/><circle cx="977.4" cy="309.5" r="4.65" fill="#00acc1"/><circle cx="983.9" cy="312.1" r="4.65" fill="#00acc1"/><circle cx="910.3" cy="321.3" r="4.65" fill="#00acc1"/><circle cx="916.8" cy="317.4" r="4.65" fill="#00acc1"/><circle cx="922.1" cy="313.4" r="4.65" fill="#00acc1"/><circle cx="924.7" cy="321.3" r="4.65" fill="#00acc1"/><circle cx="932.6" cy="323.3" r="4.65" fill="#00acc1"/><circle cx="951.1" cy="320.0" r="4.65" fill="#00acc1"/><circle cx="948.4" cy="325.3" r="4.65" fill="#00acc1"/><circle cx="956.3" cy="316.1" r="4.65" fill="#00acc1"/><circle cx="961.6" cy="318.7" r="4.65" fill="#00acc1"/><circle cx="974.7" cy="316.1" r="4.65" fill="#00acc1"/><circle cx="982.6" cy="320.0" r="4.65" fill="#00acc1"/><circle cx="974.7" cy="323.9" r="4.65" fill="#00acc1"/><circle cx="987.9" cy="323.9" r="4.65" fill="#00acc1"/><circle cx="903.7" cy="333.2" r="4.65" fill="#00acc1"/><circle cx="914.2" cy="333.8" r="4.65" fill="#00acc1"/><circle cx="922.1" cy="327.9" r="4.65" fill="#00acc1"/><circle cx="928.7" cy="330.5" r="4.65" fill="#00acc1"/><circle cx="937.9" cy="329.2" r="4.65" fill="#00acc1"/><circle cx="933.9" cy="335.8" r="4.65" fill="#00acc1"/><circle cx="956.3" cy="329.2" r="4.65" fill="#00acc1"/><circle cx="961.6" cy="333.2" r="4.65" fill="#00acc1"/><circle cx="969.5" cy="331.8" r="4.65" fill="#00acc1"/><circle cx="977.4" cy="334.5" r="4.65" fill="#00acc1"/><circle cx="985.3" cy="331.8" r="4.65" fill="#00acc1"/><circle cx="953.7" cy="334.5" r="4.65" fill="#00acc1"/><circle cx="907.6" cy="346.3" r="4.65" fill="#00acc1"/><circle cx="908.9" cy="339.7" r="4.65" fill="#00acc1"/><circle cx="919.5" cy="341.1" r="4.65" fill="#00acc1"/><circle cx="927.4" cy="339.7" r="4.65" fill="#00acc1"/><circle cx="937.9" cy="341.1" r="4.65" fill="#00acc1"/><circle cx="944.5" cy="339.7" r="4.65" fill="#00acc1"/><circle cx="949.7" cy="345.0" r="4.65" fill="#00acc1"/><circle cx="965.5" cy="341.1" r="4.65" fill="#00acc1"/><circle cx="973.4" cy="339.7" r="4.65" fill="#00acc1"/><circle cx="981.3" cy="341.1" r="4.65" fill="#00acc1"/><circle cx="987.9" cy="339.7" r="4.65" fill="#00acc1"/><circle cx="930.0" cy="346.3" r="4.65" fill="#00acc1"/><circle cx="969.5" cy="347.6" r="4.65" fill="#00acc1"/><circle cx="961.6" cy="350.3" r="4.65" fill="#00acc1"/><circle cx="912.9" cy="352.9" r="4.65" fill="#00acc1"/><circle cx="924.7" cy="356.8" r="4.65" fill="#00acc1"/><circle cx="932.6" cy="356.8" r="4.65" fill="#00acc1"/><circle cx="936.6" cy="359.5" r="4.65" fill="#00acc1"/><circle cx="948.4" cy="352.9" r="4.65" fill="#00acc1"/><circle cx="956.3" cy="354.2" r="4.65" fill="#00acc1"/><circle cx="974.7" cy="350.3" r="4.65" fill="#00acc1"/><circle cx="981.3" cy="350.3" r="4.65" fill="#00acc1"/><circle cx="974.7" cy="360.8" r="4.65" fill="#00acc1"/><circle cx="980.0" cy="362.1" r="4.65" fill="#00acc1"/><circle cx="989.2" cy="360.8" r="4.65" fill="#00acc1"/><circle cx="945.8" cy="360.8" r="4.65" fill="#00acc1"/><circle cx="914.2" cy="360.8" r="4.65" fill="#00acc1"/><circle cx="908.9" cy="368.7" r="4.65" fill="#00acc1"/><circle cx="916.8" cy="370.0" r="4.65" fill="#00acc1"/><circle cx="924.7" cy="372.6" r="4.65" fill="#00acc1"/><circle cx="943.2" cy="370.0" r="4.65" fill="#00acc1"/><circle cx="951.1" cy="370.0" r="4.65" fill="#00acc1"/><circle cx="960.3" cy="367.4" r="4.65" fill="#00acc1"/><circle cx="969.5" cy="370.0" r="4.65" fill="#00acc1"/><circle cx="976.1" cy="370.0" r="4.65" fill="#00acc1"/><circle cx="990.0" cy="370.0" r="4.65" fill="#00acc1"/><circle cx="935.3" cy="373.9" r="4.65" fill="#00acc1"/><circle cx="993.4" cy="298.9" r="4.65" fill="#00acc1"/><circle cx="1000.0" cy="297.6" r="4.65" fill="#00acc1"/><circle cx="1011.2" cy="298.3" r="4.65" fill="#00acc1"/><circle cx="1021.1" cy="297.6" r="4.65" fill="#00acc1"/><circle cx="1040.1" cy="296.3" r="4.65" fill="#00acc1"/><circle cx="1050.7" cy="297.6" r="4.65" fill="#00acc1"/><circle cx="1050.7" cy="306.2" r="4.65" fill="#00acc1"/><circle cx="1028.7" cy="306.8" r="4.65" fill="#00acc1"/><circle cx="992.1" cy="305.5" r="4.65" fill="#00acc1"/><circle cx="989.5" cy="312.1" r="4.65" fill="#00acc1"/><circle cx="993.4" cy="314.7" r="4.65" fill="#00acc1"/><circle cx="1014.5" cy="312.8" r="4.65" fill="#00acc1"/><circle cx="1009.2" cy="316.1" r="4.65" fill="#00acc1"/><circle cx="1002.6" cy="323.3" r="4.65" fill="#00acc1"/><circle cx="1007.9" cy="326.6" r="4.65" fill="#00acc1"/><circle cx="1015.1" cy="324.2" r="4.65" fill="#00acc1"/><circle cx="1023.7" cy="324.6" r="4.65" fill="#00acc1"/><circle cx="1028.3" cy="324.6" r="4.65" fill="#00acc1"/><circle cx="1050.7" cy="318.0" r="4.65" fill="#00acc1"/><circle cx="1047.4" cy="321.3" r="4.65" fill="#00acc1"/><circle cx="1042.1" cy="325.3" r="4.65" fill="#00acc1"/><circle cx="1051.3" cy="325.3" r="4.65" fill="#00acc1"/><circle cx="1036.8" cy="328.6" r="4.65" fill="#00acc1"/><circle cx="1031.6" cy="331.8" r="4.65" fill="#00acc1"/><circle cx="1039.5" cy="333.2" r="4.65" fill="#00acc1"/><circle cx="1050.7" cy="333.8" r="4.65" fill="#00acc1"/><circle cx="1050.7" cy="341.1" r="4.65" fill="#00acc1"/><circle cx="1037.5" cy="339.1" r="4.65" fill="#00acc1"/><circle cx="1005.3" cy="333.2" r="4.65" fill="#00acc1"/><circle cx="1000.0" cy="333.2" r="4.65" fill="#00acc1"/><circle cx="994.7" cy="338.4" r="4.65" fill="#00acc1"/><circle cx="1025.7" cy="342.1" r="4.65" fill="#00acc1"/><circle cx="1011.8" cy="340.4" r="4.65" fill="#00acc1"/><circle cx="1007.9" cy="344.3" r="4.65" fill="#00acc1"/><circle cx="1014.5" cy="347.0" r="4.65" fill="#00acc1"/><circle cx="1017.1" cy="350.9" r="4.65" fill="#00acc1"/><circle cx="995.4" cy="354.5" r="4.65" fill="#00acc1"/><circle cx="1005.3" cy="353.9" r="4.65" fill="#00acc1"/><circle cx="1007.9" cy="358.2" r="4.65" fill="#00acc1"/><circle cx="1013.8" cy="360.8" r="4.65" fill="#00acc1"/><circle cx="1019.7" cy="360.8" r="4.65" fill="#00acc1"/><circle cx="1021.1" cy="366.7" r="4.65" fill="#00acc1"/><circle cx="1028.9" cy="356.2" r="4.65" fill="#00acc1"/><circle cx="1028.9" cy="362.8" r="4.65" fill="#00acc1"/><circle cx="1035.5" cy="350.5" r="4.65" fill="#00acc1"/><circle cx="1045.0" cy="348.9" r="4.65" fill="#00acc1"/><circle cx="1001.3" cy="371.1" r="4.65" fill="#00acc1"/><circle cx="992.1" cy="363.4" r="4.65" fill="#00acc1"/><circle cx="985.5" cy="362.1" r="4.65" fill="#00acc1"/><circle cx="977.6" cy="360.8" r="4.65" fill="#00acc1"/><circle cx="1050.7" cy="371.3" r="4.65" fill="#00acc1"/><circle cx="889.2" cy="372.6" r="4.65" fill="#00acc1"/><circle cx="862.9" cy="390.4" r="4.65" fill="#00acc1"/><circle cx="866.8" cy="397.0" r="4.65" fill="#00acc1"/><circle cx="872.1" cy="397.6" r="4.65" fill="#00acc1"/><circle cx="869.5" cy="404.2" r="4.65" fill="#00acc1"/><circle cx="845.8" cy="402.0" r="4.65" fill="#00acc1"/><circle cx="854.3" cy="404.5" r="4.65" fill="#00acc1"/><circle cx="868.8" cy="412.8" r="4.65" fill="#00acc1"/><circle cx="874.1" cy="414.7" r="4.65" fill="#00acc1"/><circle cx="878.0" cy="410.8" r="4.65" fill="#00acc1"/><circle cx="882.6" cy="413.4" r="4.65" fill="#00acc1"/><circle cx="846.4" cy="424.2" r="4.65" fill="#00acc1"/><circle cx="881.3" cy="393.0" r="4.65" fill="#00acc1"/><circle cx="887.2" cy="391.1" r="4.65" fill="#00acc1"/><circle cx="894.5" cy="393.0" r="4.65" fill="#00acc1"/><circle cx="897.1" cy="393.7" r="4.65" fill="#00acc1"/><circle cx="893.2" cy="399.6" r="4.65" fill="#00acc1"/><circle cx="894.5" cy="404.9" r="4.65" fill="#00acc1"/><circle cx="904.7" cy="396.3" r="4.65" fill="#00acc1"/><circle cx="895.8" cy="385.1" r="4.65" fill="#00acc1"/><circle cx="901.1" cy="377.9" r="4.65" fill="#00acc1"/><circle cx="903.7" cy="383.2" r="4.65" fill="#00acc1"/><circle cx="911.6" cy="387.1" r="4.65" fill="#00acc1"/><circle cx="915.5" cy="377.2" r="4.65" fill="#00acc1"/><circle cx="920.8" cy="375.3" r="4.65" fill="#00acc1"/><circle cx="916.8" cy="392.4" r="4.65" fill="#00acc1"/><circle cx="915.5" cy="397.6" r="4.65" fill="#00acc1"/><circle cx="922.1" cy="388.4" r="4.65" fill="#00acc1"/><circle cx="927.4" cy="384.5" r="4.65" fill="#00acc1"/><circle cx="927.4" cy="397.6" r="4.65" fill="#00acc1"/><circle cx="931.3" cy="400.3" r="4.65" fill="#00acc1"/><circle cx="926.1" cy="408.8" r="4.65" fill="#00acc1"/><circle cx="927.4" cy="416.7" r="4.65" fill="#00acc1"/><circle cx="904.3" cy="410.8" r="4.65" fill="#00acc1"/><circle cx="899.1" cy="415.4" r="4.65" fill="#00acc1"/><circle cx="895.8" cy="422.6" r="4.65" fill="#00acc1"/><circle cx="901.1" cy="425.3" r="4.65" fill="#00acc1"/><circle cx="897.1" cy="429.2" r="4.65" fill="#00acc1"/><circle cx="908.9" cy="421.3" r="4.65" fill="#00acc1"/><circle cx="915.5" cy="420.0" r="4.65" fill="#00acc1"/><circle cx="919.5" cy="425.3" r="4.65" fill="#00acc1"/><circle cx="911.6" cy="429.2" r="4.65" fill="#00acc1"/><circle cx="905.0" cy="427.9" r="4.65" fill="#00acc1"/><circle cx="918.2" cy="429.2" r="4.65" fill="#00acc1"/><circle cx="908.9" cy="431.8" r="4.65" fill="#00acc1"/><circle cx="933.9" cy="422.6" r="4.65" fill="#00acc1"/><circle cx="935.3" cy="427.9" r="4.65" fill="#00acc1"/><circle cx="940.5" cy="431.8" r="4.65" fill="#00acc1"/><circle cx="945.8" cy="433.2" r="4.65" fill="#00acc1"/><circle cx="1019.7" cy="370.0" r="4.65" fill="#00acc1"/><circle cx="992.1" cy="380.5" r="4.65" fill="#00acc1"/><circle cx="1006.6" cy="383.2" r="4.65" fill="#00acc1"/><circle cx="993.4" cy="387.1" r="4.65" fill="#00acc1"/><circle cx="1000.0" cy="391.1" r="4.65" fill="#00acc1"/><circle cx="1005.3" cy="396.3" r="4.65" fill="#00acc1"/><circle cx="996.1" cy="400.3" r="4.65" fill="#00acc1"/><circle cx="989.5" cy="389.7" r="4.65" fill="#00acc1"/><circle cx="1014.5" cy="388.4" r="4.65" fill="#00acc1"/><circle cx="1021.7" cy="388.4" r="4.65" fill="#00acc1"/><circle cx="1029.6" cy="383.8" r="4.65" fill="#00acc1"/><circle cx="1042.8" cy="379.2" r="4.65" fill="#00acc1"/><circle cx="1050.7" cy="387.1" r="4.65" fill="#00acc1"/><circle cx="1050.7" cy="394.3" r="4.65" fill="#00acc1"/><circle cx="1050.7" cy="400.9" r="4.65" fill="#00acc1"/><circle cx="1050.7" cy="408.2" r="4.65" fill="#00acc1"/><circle cx="1032.2" cy="394.3" r="4.65" fill="#00acc1"/><circle cx="1036.8" cy="399.6" r="4.65" fill="#00acc1"/><circle cx="1042.1" cy="397.6" r="4.65" fill="#00acc1"/><circle cx="1034.2" cy="408.2" r="4.65" fill="#00acc1"/><circle cx="1026.3" cy="408.2" r="4.65" fill="#00acc1"/><circle cx="1018.4" cy="410.1" r="4.65" fill="#00acc1"/><circle cx="1023.7" cy="414.7" r="4.65" fill="#00acc1"/><circle cx="1011.2" cy="411.4" r="4.65" fill="#00acc1"/><circle cx="1002.6" cy="410.8" r="4.65" fill="#00acc1"/><circle cx="994.7" cy="408.2" r="4.65" fill="#00acc1"/><circle cx="996.1" cy="414.7" r="4.65" fill="#00acc1"/><circle cx="992.1" cy="420.0" r="4.65" fill="#00acc1"/><circle cx="1002.6" cy="425.3" r="4.65" fill="#00acc1"/><circle cx="1009.2" cy="422.6" r="4.65" fill="#00acc1"/><circle cx="1015.8" cy="420.0" r="4.65" fill="#00acc1"/><circle cx="1015.8" cy="427.9" r="4.65" fill="#00acc1"/><circle cx="1006.6" cy="427.9" r="4.65" fill="#00acc1"/><circle cx="997.4" cy="427.9" r="4.65" fill="#00acc1"/><circle cx="990.8" cy="427.9" r="4.65" fill="#00acc1"/><circle cx="1042.8" cy="415.4" r="4.65" fill="#00acc1"/><circle cx="1040.8" cy="421.3" r="4.65" fill="#00acc1"/><circle cx="1050.7" cy="422.0" r="4.65" fill="#00acc1"/><circle cx="1050.7" cy="426.6" r="4.65" fill="#00acc1"/><circle cx="1029.6" cy="426.6" r="4.65" fill="#00acc1"/><circle cx="1032.9" cy="431.2" r="4.65" fill="#00acc1"/><circle cx="89.9" cy="154.1" r="4.6" fill="#ff9100"/><circle cx="203.9" cy="154.1" r="4.6" fill="#2196f3"/><circle cx="662.1" cy="154.1" r="4.6" fill="#9c27b0"/><circle cx="776.1" cy="154.1" r="4.6" fill="#00acc1"/><path d="M650.5 434.5 V176.5 H1122.5 V434.5 M650.5 434.5 H1122.5" fill="none" stroke="#1a73e8" stroke-width="1" stroke-dasharray="3.4 1.8"/><rect x="599.5" y="125.5" width="559" height="359" fill="none" stroke="#1a73e8" stroke-width="1.1"/><rect x="596.5" y="122.5" width="7" height="7" fill="#1a73e8" stroke="#fff" stroke-width="1"/><rect x="596.5" y="302.5" width="7" height="7" fill="#1a73e8" stroke="#fff" stroke-width="1"/><rect x="596.5" y="481.5" width="7" height="7" fill="#1a73e8" stroke="#fff" stroke-width="1"/><rect x="876.5" y="122.5" width="7" height="7" fill="#1a73e8" stroke="#fff" stroke-width="1"/><rect x="876.5" y="481.5" width="7" height="7" fill="#1a73e8" stroke="#fff" stroke-width="1"/><rect x="1155.5" y="122.5" width="7" height="7" fill="#1a73e8" stroke="#fff" stroke-width="1"/><rect x="1155.5" y="302.5" width="7" height="7" fill="#1a73e8" stroke="#fff" stroke-width="1"/><rect x="1155.5" y="481.5" width="7" height="7" fill="#1a73e8" stroke="#fff" stroke-width="1"/><path d="M1108.8 102.2 L1099.7 110.6 L1104.7 111.2 L1102.2 117.8 L1111.5 109.3 L1106.7 108.8 Z" fill="#e0e0e0"/><circle cx="1134.9" cy="105.2" r="1.9" fill="#757575"/><circle cx="1134.9" cy="110" r="1.9" fill="#757575"/><circle cx="1134.9" cy="114.8" r="1.9" fill="#757575"/></svg>
<div id="txt">
<span class="t" style="left:1476.6px;top:18.76px;font-size:16px;color:#202124;letter-spacing:0.455px;">Chart</span>
<span class="t" style="left:1543.2px;top:18.76px;font-size:16px;color:#202124;letter-spacing:0.302px;">Scatter</span>
<span class="t" style="left:1439.5px;top:64.63px;font-size:12.6px;color:#2962d9;font-weight:bold;letter-spacing:-0.477px;">DATA</span>
<span class="t" style="left:1532.4px;top:64.63px;font-size:12.6px;color:#757575;font-weight:bold;letter-spacing:-0.559px;">STYLE</span>
<span class="t" style="left:1413.2px;top:106.23px;font-size:10.6px;color:#757575;font-weight:bold;transform-origin:0 50%;transform:scaleX(0.9677);">Data source</span>
<span class="t" style="left:1413.2px;top:184.43px;font-size:10.6px;color:#757575;font-weight:bold;transform-origin:0 50%;transform:scaleX(0.8788);">Date Range Dimension</span>
<span class="t" style="left:1413.2px;top:255.93px;font-size:10.6px;color:#757575;font-weight:bold;transform-origin:0 50%;transform:scaleX(0.9602);">Dimension</span>
<span class="t" style="left:1413.2px;top:376.93px;font-size:10.6px;color:#757575;font-weight:bold;transform-origin:0 50%;transform:scaleX(0.9570);">Drill down</span>
<span class="t" style="left:1413.2px;top:430.23px;font-size:10.6px;color:#757575;font-weight:bold;transform-origin:0 50%;transform:scaleX(0.9049);">Metric X</span>
<span class="t" style="left:1413.2px;top:483.93px;font-size:10.6px;color:#757575;font-weight:bold;transform-origin:0 50%;transform:scaleX(0.9091);">Metric Y</span>
<span class="t" style="left:1413.2px;top:537.93px;font-size:10.6px;color:#757575;font-weight:bold;transform-origin:0 50%;transform:scaleX(0.8940);">Bubble Size Metric</span>
<span class="t" style="left:1413.2px;top:599.83px;font-size:10.6px;color:#757575;font-weight:bold;transform-origin:0 50%;transform:scaleX(0.9661);">Metric sliders</span>
<span class="t" style="left:1445.0px;top:132.19px;font-size:11px;color:#212121;letter-spacing:-0.178px;">churn_eda</span>
<span class="t" style="left:1445.0px;top:285.19px;font-size:11px;color:#212121;letter-spacing:-0.036px;">CustomerId</span>
<span class="t" style="left:1445.0px;top:313.19px;font-size:11px;color:#212121;letter-spacing:-0.045px;">exited_category</span>
<span class="t" style="left:1445.0px;top:455.19px;font-size:11px;color:#212121;letter-spacing:-0.098px;">CreditScore</span>
<span class="t" style="left:1445.0px;top:509.19px;font-size:11px;color:#212121;letter-spacing:-0.040px;">EstimatedSalary</span>
<span class="t" style="left:1441.4px;top:158.96px;font-size:10.8px;color:#2f6bd8;letter-spacing:-0.320px;">BLEND DATA</span>
<span class="t" style="left:1553.1px;top:159.26px;font-size:10.5px;color:#999;font-weight:bold;transform:translateX(-50%);">?</span>
<span class="t" style="left:1445.2px;top:208.89px;font-size:11px;color:#7a7a7a;letter-spacing:-0.014px;">Add dimension</span>
<span class="t" style="left:1445.2px;top:340.89px;font-size:11px;color:#7a7a7a;letter-spacing:-0.014px;">Add dimension</span>
<span class="t" style="left:1445.2px;top:562.89px;font-size:11px;color:#7a7a7a;letter-spacing:0.042px;">Add metric</span>
<span class="t" style="left:1573.2px;top:105.93px;font-size:10.6px;color:#757575;font-weight:bold;transform-origin:0 50%;transform:scaleX(0.9663);">Available Fields</span>
<span class="t" style="left:1605.4px;top:131.84px;font-size:12px;color:#757575;letter-spacing:-0.108px;">Type to search</span>
<span class="t" style="left:1605.0px;top:162.99px;font-size:11px;color:#212121;letter-spacing:-0.065px;">exited_category</span>
<span class="t" style="left:1605.0px;top:184.99px;font-size:11px;color:#212121;letter-spacing:-0.06px;">Gender</span>
<span class="t" style="left:1605.0px;top:206.99px;font-size:11px;color:#212121;letter-spacing:-0.06px;">Geography</span>
<span class="t" style="left:1605.0px;top:228.99px;font-size:11px;color:#212121;letter-spacing:-0.06px;">Surname</span>
<span class="t" style="left:1605.0px;top:250.99px;font-size:11px;color:#212121;letter-spacing:-0.06px;">Age</span>
<span class="t" style="left:1605.0px;top:272.99px;font-size:11px;color:#212121;letter-spacing:-0.06px;">Balance</span>
<span class="t" style="left:1605.0px;top:294.99px;font-size:11px;color:#212121;letter-spacing:-0.06px;">CreditScore</span>
<span class="t" style="left:1605.0px;top:316.99px;font-size:11px;color:#212121;letter-spacing:-0.06px;">CustomerId</span>
<span class="t" style="left:1605.0px;top:338.99px;font-size:11px;color:#212121;letter-spacing:-0.06px;">EstimatedSalary</span>
<span class="t" style="left:1605.0px;top:360.99px;font-size:11px;color:#212121;letter-spacing:-0.06px;">Exited</span>
<span class="t" style="left:1605.0px;top:382.99px;font-size:11px;color:#212121;letter-spacing:-0.06px;">HasCrCard</span>
<span class="t" style="left:1605.0px;top:404.99px;font-size:11px;color:#212121;letter-spacing:-0.06px;">IsActiveMember</span>
<span class="t" style="left:1605.0px;top:426.99px;font-size:11px;color:#212121;letter-spacing:-0.06px;">NumOfProducts</span>
<span class="t" style="left:1605.0px;top:448.99px;font-size:11px;color:#212121;letter-spacing:-0.06px;">percent</span>
<span class="t" style="left:1605.0px;top:470.99px;font-size:11px;color:#212121;letter-spacing:-0.06px;">RowNumber</span>
<span class="t" style="left:1605.0px;top:492.99px;font-size:11px;color:#212121;letter-spacing:-0.06px;">Tenure</span>
<span class="t" style="left:1605.0px;top:514.99px;font-size:11px;color:#212121;letter-spacing:-0.06px;">Record Count</span>
<span class="t" style="left:107.4px;top:144.04px;font-size:12px;color:#dedede;letter-spacing:0.020px;">amount_lost</span>
<span class="t" style="left:221.3px;top:144.04px;font-size:12px;color:#dedede;letter-spacing:-0.079px;">amount_retained</span>
<span class="t" style="left:72.4px;top:423.64px;font-size:12px;color:#dedede;transform:translateX(-100%);">0</span>
<span class="t" style="left:72.4px;top:372.34px;font-size:12px;color:#dedede;transform:translateX(-100%);">5K</span>
<span class="t" style="left:72.4px;top:321.04px;font-size:12px;color:#dedede;transform:translateX(-100%);">10K</span>
<span class="t" style="left:72.4px;top:269.74px;font-size:12px;color:#dedede;transform:translateX(-100%);">15K</span>
<span class="t" style="left:72.4px;top:218.44px;font-size:12px;color:#dedede;transform:translateX(-100%);">20K</span>
<span class="t" style="left:72.4px;top:167.14px;font-size:12px;color:#dedede;transform:translateX(-100%);">25K</span>
<span class="t" style="left:39.8px;top:294.34px;font-size:12px;color:#dedede;font-style:italic;letter-spacing:-0.158px;transform:translateX(-50%);transform:translate(-50%,0) rotate(-90deg);">EstimatedSalary</span>
<span class="t" style="left:679.4px;top:144.04px;font-size:12px;color:#dedede;letter-spacing:0.020px;">amount_lost</span>
<span class="t" style="left:793.3px;top:144.04px;font-size:12px;color:#dedede;letter-spacing:-0.079px;">amount_retained</span>
<span class="t" style="left:644.4px;top:423.64px;font-size:12px;color:#dedede;transform:translateX(-100%);">0</span>
<span class="t" style="left:644.4px;top:372.34px;font-size:12px;color:#dedede;transform:translateX(-100%);">5K</span>
<span class="t" style="left:644.4px;top:321.04px;font-size:12px;color:#dedede;transform:translateX(-100%);">10K</span>
<span class="t" style="left:644.4px;top:269.74px;font-size:12px;color:#dedede;transform:translateX(-100%);">15K</span>
<span class="t" style="left:644.4px;top:218.44px;font-size:12px;color:#dedede;transform:translateX(-100%);">20K</span>
<span class="t" style="left:644.4px;top:167.14px;font-size:12px;color:#dedede;transform:translateX(-100%);">25K</span>
<span class="t" style="left:611.8px;top:294.34px;font-size:12px;color:#dedede;font-style:italic;letter-spacing:-0.158px;transform:translateX(-50%);transform:translate(-50%,0) rotate(-90deg);">EstimatedSalary</span>
<span class="t" style="left:78.5px;top:437.04px;font-size:12px;color:#dedede;transform:translateX(-50%);">0</span>
<span class="t" style="left:172.6px;top:437.04px;font-size:12px;color:#dedede;transform:translateX(-50%);">50K</span>
<span class="t" style="left:266.6px;top:437.04px;font-size:12px;color:#dedede;transform:translateX(-50%);">100K</span>
<span class="t" style="left:360.6px;top:437.04px;font-size:12px;color:#dedede;transform:translateX(-50%);">150K</span>
<span class="t" style="left:454.7px;top:437.04px;font-size:12px;color:#dedede;transform:translateX(-50%);">200K</span>
<span class="t" style="left:548.8px;top:437.04px;font-size:12px;color:#dedede;transform:translateX(-50%);">250K</span>
<span class="t" style="left:651.0px;top:437.04px;font-size:12px;color:#dedede;transform:translateX(-50%);">0</span>
<span class="t" style="left:745.1px;top:437.04px;font-size:12px;color:#dedede;transform:translateX(-50%);">200</span>
<span class="t" style="left:839.2px;top:437.04px;font-size:12px;color:#dedede;transform:translateX(-50%);">400</span>
<span class="t" style="left:933.3px;top:437.04px;font-size:12px;color:#dedede;transform:translateX(-50%);">600</span>
<span class="t" style="left:1027.4px;top:437.04px;font-size:12px;color:#dedede;transform:translateX(-50%);">800</span>
<span class="t" style="left:1121.5px;top:437.04px;font-size:12px;color:#dedede;transform:translateX(-50%);">1K</span>
<span class="t" style="left:313.5px;top:458.84px;font-size:12px;color:#dedede;font-style:italic;transform:translateX(-50%);">Balance</span>
<span class="t" style="left:886.0px;top:458.84px;font-size:12px;color:#dedede;font-style:italic;transform:translateX(-50%);">CreditScore</span>
</div>
</body></html>
